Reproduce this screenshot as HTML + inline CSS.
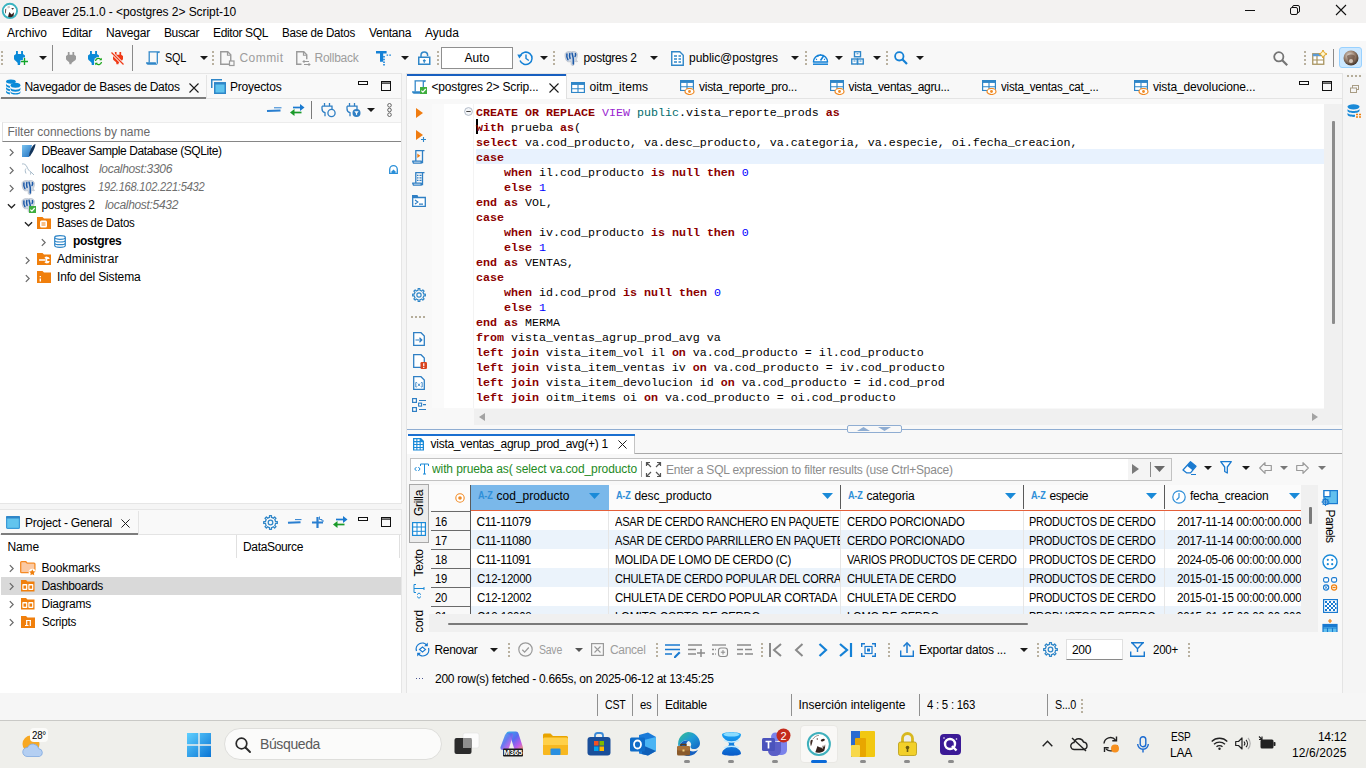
<!DOCTYPE html>
<html><head><meta charset="utf-8"><title>DBeaver</title>
<style>
*{box-sizing:border-box;margin:0;padding:0}
html,body{width:1366px;height:768px;overflow:hidden;background:#f5f5f5}
body{position:relative;font-family:"Liberation Sans",sans-serif;font-size:12px;color:#000}
.a{position:absolute}
.t{position:absolute;white-space:nowrap;font-size:12px;line-height:16px;height:16px;color:#000}
.g{color:#8a8a8a}
.i{font-style:italic;color:#6e6e6e}
svg{position:absolute;overflow:visible}
.dd{position:absolute;width:0;height:0;border-left:4px solid transparent;border-right:4px solid transparent;border-top:4px solid #1a1a1a}
.hd{position:absolute;width:2px;height:22px;background-image:linear-gradient(#b9b1a0 50%,transparent 50%);background-size:2px 4px}
.vs{position:absolute;width:1px;background:#a0a0a0}
.code{position:absolute;white-space:pre;font-family:"Liberation Mono",monospace;font-size:11.67px;line-height:15px;height:15px;color:#000}
.k{color:#8b0000;font-weight:bold}
.v{color:#9a1fd0;font-weight:normal}
.p{color:#006b6b}
.n{color:#0000ff}
</style></head>
<body>

<!-- symbols -->
<svg width="0" height="0" style="left:-10px;top:-10px">
<defs>
<symbol id="plug" viewBox="0 0 11 14" preserveAspectRatio="none"><path d="M2 0h1.900v3h3.200V0h1.900v3l2 1.500v3c0 1-0.800 1.600-2 2.500-1.800 1.300-3 1.700-3 3.500v0.500H3.700V12.500C3.700 10.500 0 9.800 0 7.500v-3L2 3z"></path></symbol>
<symbol id="chr" viewBox="0 0 6 10"><path d="M1 1l4 4-4 4" fill="none" stroke="#6a6a6a" stroke-width="1.500"></path></symbol>
<symbol id="chd" viewBox="0 0 10 6"><path d="M1 1l4 4 4-4" fill="none" stroke="#222" stroke-width="1.400"></path></symbol>
<symbol id="xx" viewBox="0 0 10 10"><path d="M0.500 0.500l9 9M9.500 0.500l-9 9" fill="none" stroke="#1a1a1a" stroke-width="1.100"></path></symbol>
<symbol id="tbl" viewBox="0 0 14 12" preserveAspectRatio="none"><rect x="0.600" y="0.600" width="12.800" height="10.800" fill="#fff" stroke="#2f86c8" stroke-width="1.200"></rect><rect x="0" y="0" width="14" height="3.200" fill="#2f86c8"></rect><path d="M7 3v8.500M0.600 7.300h12.800" stroke="#2f86c8" stroke-width="1.100"></path></symbol>
<symbol id="eye" viewBox="0 0 10 7"><ellipse cx="5" cy="3.500" rx="4.500" ry="3" fill="#fff" stroke="#f08a24" stroke-width="1.200"></ellipse><circle cx="5" cy="3.500" r="1.400" fill="#f08a24"></circle></symbol>
<symbol id="scr" viewBox="0 0 14 14"><path d="M2.500 0.800h10.800l-0.800 1.200M3.200 0.800v10.700M11.300 1.200v11.500" fill="none" stroke="#2f86c8" stroke-width="1.250" stroke-linejoin="round"></path><path d="M0 11.300h9.800c0 1 0.500 1.800 1.500 2v0.500H2C0.800 13.800 0 12.800 0 11.300z" fill="#2f86c8"></path></symbol>
<symbol id="fold" viewBox="0 0 16 13"><path d="M0 1.500h6l1.500 2H16V13H0z"></path></symbol>
<symbol id="pg" viewBox="0 0 14 15"><path d="M1.200 2.500C2 0.800 5 0.300 7.500 0.800c2-0.800 5.300-0.300 5.800 2 0.400 2.200-0.300 4.500-1.300 6.300 0.800 0.500 1.500 0.800 1.500 1.300-0.800 0.600-2.200 0.300-3.200-0.300L10 13.500c-0.300 1.500-2.300 1.500-2.700 0L7 10.500c-1.200 0.300-2.500 0.600-3.700 0-1.800-1-2.700-5.500-2.100-8z" fill="#cdd7e4" stroke="#b6bcc6" stroke-width="0.700"></path><path d="M2.900 3c-0.300 2 0 4.300 1 5.600M5.800 2.600c-0.500 2-0.200 3.600 0.300 4.800M8.100 2.300c0.500 2.500 1.200 4 1.200 6.200v4.600M11.400 2.600c0.500 1 0.300 2-0.300 2.800" stroke="#1a58a8" stroke-width="1.500" fill="none" stroke-linecap="round"></path></symbol>
<symbol id="gear" viewBox="0 0 15 15"><path d="M12.33 5.85 L12.50 6.51 L14.33 6.50 L14.33 8.50 L12.50 8.49 L12.33 9.15 L12.08 9.74 L11.74 10.33 L13.03 11.62 L11.62 13.03 L10.33 11.74 L9.74 12.08 L9.15 12.33 L8.49 12.50 L8.50 14.33 L6.50 14.33 L6.51 12.50 L5.85 12.33 L5.26 12.08 L4.67 11.74 L3.38 13.03 L1.97 11.62 L3.26 10.33 L2.92 9.74 L2.67 9.15 L2.50 8.49 L0.67 8.50 L0.67 6.50 L2.50 6.51 L2.67 5.85 L2.92 5.26 L3.26 4.67 L1.97 3.38 L3.38 1.97 L4.67 3.26 L5.26 2.92 L5.85 2.67 L6.51 2.50 L6.50 0.67 L8.50 0.67 L8.49 2.50 L9.15 2.67 L9.74 2.92 L10.33 3.26 L11.62 1.97 L13.03 3.38 L11.74 4.67 L12.08 5.26z" fill="none" stroke="#2f86c8" stroke-width="1.250" stroke-linejoin="round"></path><circle cx="7.500" cy="7.500" r="2.300" fill="none" stroke="#2f86c8" stroke-width="1.250"></circle></symbol>
</defs></svg>
<!-- ===== title bar ===== -->
<div class="a" id="titlebar" style="left:0;top:0;width:1366px;height:23px;background:#f3f2f1"></div>
<!-- ===== menu bar ===== -->
<div class="a" id="menubar" style="left:0;top:23px;width:1366px;height:18px;background:#fff"></div>
<!-- ===== toolbar ===== -->
<div class="a" id="toolbar" style="left:0;top:41px;width:1366px;height:32px;background:#f8f8f8"></div>
<!-- ===== left top panel ===== -->
<div class="a" id="lp" style="left:0;top:73px;width:402px;height:431px;background:#fff;border:1px solid #e6e6e6;border-left:0"></div>
<div class="a" style="left:0;top:74px;width:401px;height:48px;background:#f9f9f9"></div>
<div class="a" style="left:0;top:98px;width:401px;height:1px;background:#e4e4e4"></div>
<!-- ===== left bottom panel ===== -->
<div class="a" id="lb" style="left:0;top:509px;width:402px;height:185px;background:#fff;border:1px solid #e6e6e6;border-left:0"></div>
<div class="a" style="left:0;top:510px;width:401px;height:24px;background:#f9f9f9"></div>
<div class="a" style="left:0;top:534px;width:401px;height:1px;background:#e4e4e4"></div>
<!-- ===== editor panel ===== -->
<div class="a" id="ed" style="left:406px;top:73px;width:937px;height:621px;background:#f8f8f8;border:1px solid #e4e4e4"></div>
<!-- ===== right strip ===== -->
<div class="a" id="rs" style="left:1343px;top:73px;width:23px;height:620px;background:#f5f5f5"></div>
<!-- ===== status bar ===== -->
<div class="a" id="sb" style="left:0;top:693px;width:1366px;height:27px;background:#f6f6f6"></div>
<!-- ===== taskbar ===== -->
<div class="a" id="tb" style="left:0;top:720px;width:1366px;height:48px;background:#efefeb;border-top:1px solid #c9c9c6"></div>

<!-- title content -->
<svg style="left:1px;top:2px" width="18" height="18" viewBox="0 0 18 18"><circle cx="8.900" cy="8.900" r="7.150" fill="#fff" stroke="#3ab3c0" stroke-width="1.900"></circle><path d="M7 14.800l1.300-4.800 2.200 2.600 2.600-2.300-0.600 3.600c-1.600 1.400-3.800 1.700-5.500 0.900z" fill="#35201c"></path><path d="M10.200 6.300l2.800-0.300-1.300 1.800z" fill="#35201c"></path><path d="M4.300 7.300l1-0.900-0.400 4.200-0.900 1.200z" fill="#4a3530"></path><path d="M6.300 5.200l2.500-1M6.800 6l2-0.600" stroke="#8a7a74" stroke-width="0.500"></path></svg>
<span class="t" style="left: 23px; top: 4px; letter-spacing: -0.06px;">DBeaver 25.1.0 - &lt;postgres 2&gt; Script-10</span>
<svg style="left:1245px;top:10px" width="10" height="1"><rect width="10" height="1" fill="#111"></rect></svg>
<svg style="left:1290px;top:5px" width="10" height="10" viewBox="0 0 10 10"><rect x="0.500" y="2.500" width="7" height="7" rx="1.500" fill="none" stroke="#111"></rect><path d="M2.500 2.500V2a1.500 1.500 0 0 1 1.500-1.500h4A1.500 1.500 0 0 1 9.500 2v4a1.500 1.500 0 0 1-1.500 1.500h-0.500" fill="none" stroke="#111"></path></svg>
<svg style="left:1336px;top:5px" width="10" height="10" viewBox="0 0 10 10"><path d="M0 0l10 10M10 0L0 10" stroke="#111" stroke-width="1.100"></path></svg>
<!-- menu -->
<span class="t" style="left: 7px; top: 25px; letter-spacing: 0px;">Archivo</span>
<span class="t" style="left: 62px; top: 25px; letter-spacing: -0.23px;">Editar</span>
<span class="t" style="left: 106px; top: 25px; letter-spacing: -0.19px;">Navegar</span>
<span class="t" style="left: 164px; top: 25px; letter-spacing: -0.39px;">Buscar</span>
<span class="t" style="left: 213px; top: 25px; letter-spacing: -0.37px;">Editor SQL</span>
<span class="t" style="left: 282px; top: 25px; letter-spacing: -0.25px; transform: scaleX(0.9673); transform-origin: 0px 50%;">Base de Datos</span>
<span class="t" style="left: 369px; top: 25px; letter-spacing: -0.29px;">Ventana</span>
<span class="t" style="left: 425px; top: 25px; letter-spacing: 0.04px;">Ayuda</span>

<!-- toolbar content -->
<div class="hd" style="left:1px;top:51px;height:14px"></div>
<svg style="left:14px;top:51px" width="11" height="14" fill="#0a8ad8"><use href="#plug"></use></svg>
<svg style="left:20px;top:57px" width="9" height="9" viewBox="0 0 9 9"><path d="M4.500 0.500v8M0.500 4.500h8" stroke="#f8f8f8" stroke-width="3.200"></path><path d="M4.500 1v7M1 4.500h7" stroke="#12a52a" stroke-width="1.350"></path></svg>
<div class="dd" style="left:39px;top:56px"></div>
<div class="vs" style="left:52px;top:45px;height:26px;background:#8a8a8a"></div>
<svg style="left:65.500px;top:52px" width="10" height="12.500" fill="#9a9a9a"><use href="#plug"></use></svg>
<svg style="left:88px;top:51px" width="11" height="14" fill="#0a8ad8"><use href="#plug"></use></svg>
<svg style="left:94px;top:57px" width="9" height="9" viewBox="0 0 9 9"><circle cx="4.500" cy="4.500" r="4.500" fill="#f8f8f8"></circle><path d="M1.500 4a3 3 0 0 1 5.500-1.200M7.500 5a3 3 0 0 1-5.500 1.200" fill="none" stroke="#1aa51a" stroke-width="1.300"></path><path d="M7.800 0.800v2.500H5.300zM1.200 8.200V5.700h2.500z" fill="#1aa51a"></path></svg>
<svg style="left:112.500px;top:52px" width="10" height="12.500" fill="#f03a17"><use href="#plug"></use></svg>
<svg style="left:111px;top:52px" width="13" height="13" viewBox="0 0 13 13"><path d="M0.500 0.500l12 12" stroke="#f8f8f8" stroke-width="3"></path><path d="M0.500 0.500l12 12" stroke="#f03a17" stroke-width="1.300"></path></svg>
<div class="vs" style="left:132px;top:45px;height:26px;background:#8a8a8a"></div>
<svg style="left:146px;top:51px" width="14" height="14"><use href="#scr"></use></svg>
<span class="t" style="left: 165px; top: 50px; letter-spacing: -0.25px; transform: scaleX(0.9026); transform-origin: 0px 50%;">SQL</span>
<div class="dd" style="left:200px;top:56px"></div>
<div class="hd" style="left:212px;top:51px;height:14px"></div>
<svg style="left:220px;top:51px" width="15" height="15" viewBox="0 0 15 15"><path d="M0.750 0.750h7l3 3v9.500h-10z" fill="none" stroke="#9a9a9a" stroke-width="1.400"></path><path d="M7.500 0.750v3.500h3.500" fill="none" stroke="#9a9a9a" stroke-width="1.200"></path><rect x="9.500" y="10" width="4.500" height="4.500" fill="#f8f8f8" stroke="#9a9a9a" stroke-width="1.200"></rect></svg>
<span class="t g" style="left: 239.5px; top: 50px; color: rgb(157, 157, 157); letter-spacing: 0.44px;">Commit</span>
<svg style="left:296px;top:51px" width="15" height="15" viewBox="0 0 15 15"><path d="M5.500 13.250H0.750V0.750h7l3 3v4.500" fill="none" stroke="#9a9a9a" stroke-width="1.400"></path><path d="M7.500 0.750v3.500h3.500" fill="none" stroke="#9a9a9a" stroke-width="1.200"></path><path d="M7 10.500h6M7 10.500l1.500-1.500M7 10.500l1.500 1.500M14 13.500H8M14 13.500l-1.500-1.500M14 13.500l-1.500 1.500" stroke="#9a9a9a" stroke-width="1" fill="none"></path></svg>
<span class="t" style="left: 314.5px; top: 50px; color: rgb(157, 157, 157); letter-spacing: -0.25px;">Rollback</span>
<svg style="left:376px;top:51px" width="15" height="15" viewBox="0 0 15 15"><path d="M0 0.100h10.600v2.400H7.200v8.200H4V2.500H0z" fill="#1481d6"></path><path d="M10.600 3.500h1.500v1.300h-1.500zM13.300 3.500h1.600v1.300h-1.600zM7.200 5h1.600v1.500H7.200zM7.200 7.700h1.600v1.500H7.200zM7.200 10.500h1.600v1.500H7.200zM7.200 13h1.600v1.400H7.200z" fill="#1481d6"></path></svg>
<div class="dd" style="left:400.500px;top:56px"></div>
<svg style="left:418px;top:51px" width="13" height="14" viewBox="0 0 13 14"><rect x="0.750" y="6.250" width="11" height="7" fill="#fff" stroke="#2f86c8" stroke-width="1.500"></rect><path d="M3 6V4.200a3.300 3.300 0 0 1 6.600 0v0.800" fill="none" stroke="#2f86c8" stroke-width="1.500"></path><path d="M6.250 12V9M5 10l1.250-1.500L7.500 10z" stroke="#2f86c8" stroke-width="1" fill="#2f86c8"></path></svg>
<div class="hd" style="left:437px;top:51px;height:14px"></div>
<div class="a" style="left:441px;top:47px;width:72px;height:22px;background:#fff;border:1px solid #8f8f8f"></div>
<span class="t" style="left: 464.5px; top: 50px; letter-spacing: 0.08px;">Auto</span>
<svg style="left:517px;top:50px" width="17" height="16" viewBox="0 0 17 16"><path d="M3.300 5.500A6.200 6.200 0 1 1 3 10.500" fill="none" stroke="#1481d6" stroke-width="1.500"></path><path d="M0.300 4.500l5 0.300-3 3.700z" fill="#1481d6"></path><path d="M9 4.500v4l2.800 2" fill="none" stroke="#1481d6" stroke-width="1.400"></path></svg>
<div class="dd" style="left:539.500px;top:56px"></div>
<div class="hd" style="left:552.500px;top:51px;height:14px"></div>
<svg style="left:564px;top:50.500px" width="14" height="15"><use href="#pg"></use></svg>
<span class="t" style="left: 583.5px; top: 50px; letter-spacing: -0.3px;">postgres 2</span>
<div class="dd" style="left:650px;top:56px"></div>
<svg style="left:671px;top:51px" width="13" height="15" viewBox="0 0 13 15"><path d="M0.750 0.750h8l3.500 3.500v10H0.750z" fill="#fff" stroke="#2f86c8" stroke-width="1.400"></path><path d="M3 5h3M7.500 5h2.500M3 8h3M7.500 8h2.500M3 11h3M7.500 11h2.500" stroke="#2f86c8" stroke-width="1.400"></path></svg>
<span class="t" style="left: 689px; top: 50px; letter-spacing: -0.04px;">public@postgres</span>
<div class="dd" style="left:791px;top:56px"></div>
<div class="hd" style="left:804.500px;top:51px;height:14px"></div>
<svg style="left:812px;top:51px" width="17" height="14" viewBox="0 0 17 14"><path d="M1.500 11A7 7 0 1 1 15.500 11z" fill="#fff" stroke="#1481d6" stroke-width="1.500" stroke-linejoin="round"></path><path d="M1 13.200h15" stroke="#1481d6" stroke-width="1.500"></path><path d="M8.500 9.500l3-4.500" stroke="#1481d6" stroke-width="1.600"></path><path d="M4 8l1 0.700M5.500 4.800l0.800 1M8.500 3.200v1.200M13 8l-1 0.700" stroke="#1481d6" stroke-width="1.100"></path></svg>
<div class="dd" style="left:834.500px;top:56px"></div>
<svg style="left:851px;top:51px" width="13" height="14" viewBox="0 0 13 14"><rect x="3.500" y="0.750" width="6" height="5" fill="#fff" stroke="#2f86c8" stroke-width="1.400"></rect><rect x="0.750" y="8" width="5.500" height="5" fill="#fff" stroke="#2f86c8" stroke-width="1.400"></rect><rect x="6.750" y="8" width="5.500" height="5" fill="#fff" stroke="#2f86c8" stroke-width="1.400"></rect><path d="M5.500 2.800h2M2.500 10h2M8.500 10h2" stroke="#2f86c8" stroke-width="1"></path></svg>
<div class="dd" style="left:872.500px;top:56px"></div>
<div class="hd" style="left:885.500px;top:51px;height:14px"></div>
<svg style="left:894px;top:51px" width="14" height="14" viewBox="0 0 14 14"><circle cx="5.300" cy="5.300" r="4.200" fill="none" stroke="#1481d6" stroke-width="1.800"></circle><path d="M8.300 8.300l4.700 4.700" stroke="#1481d6" stroke-width="2.200"></path></svg>
<div class="dd" style="left:915.500px;top:56px"></div>
<svg style="left:1273px;top:51px" width="15" height="15" viewBox="0 0 15 15"><circle cx="5.800" cy="5.800" r="4.600" fill="none" stroke="#757575" stroke-width="1.800"></circle><path d="M9.200 9.200l5 5" stroke="#757575" stroke-width="2.200"></path></svg>
<div class="hd" style="left:1304px;top:51px;height:14px"></div>
<svg style="left:1312px;top:50px" width="15" height="15" viewBox="0 0 15 15"><rect x="0.750" y="3.750" width="11" height="10.500" fill="#fff" stroke="#a89460" stroke-width="1.300"></rect><rect x="0.750" y="3.750" width="11" height="2.500" fill="#5b9bd5"></rect><path d="M5 6v8M1 10h10.500" stroke="#a89460" stroke-width="1.200"></path><path d="M11 0l1.300 2.700L15 4l-2.700 1.300L11 8 9.700 5.300 7 4l2.700-1.300z" fill="#fff8d0" stroke="#e0a020" stroke-width="1"></path></svg>
<div class="vs" style="left:1333px;top:49px;height:18px;background:#8a8a8a"></div>
<div class="a" style="left:1339px;top:47px;width:23px;height:21px;background:#cce8ff;border:1px solid #99d1ff;border-radius:3px"></div>
<svg style="left:1343px;top:50px" width="16" height="16" viewBox="0 0 16 16"><defs><radialGradient id="bv" cx="0.400" cy="0.350" r="0.700"><stop offset="0" stop-color="#e8e0d8"></stop><stop offset="0.500" stop-color="#9a8270"></stop><stop offset="1" stop-color="#3a2a20"></stop></radialGradient></defs><circle cx="8" cy="8" r="7.500" fill="url(#bv)"></circle><path d="M4 6c2-2 6-2 8 0l-1 5c-2 1.500-4 1.500-6 0z" fill="#6a5040" opacity="0.700"></path><circle cx="8" cy="11" r="2" fill="#e8dccf" opacity="0.800"></circle></svg>

<!-- left top panel content -->
<div class="a" style="left:1px;top:97px;width:205px;height:2px;background:#7d7d7d"></div>
<div class="a" style="left:206px;top:75px;width:1px;height:23px;background:#e4e4e4"></div>
<svg style="left:6px;top:79px" width="15" height="15.500" viewBox="0 0 15 15.500"><g fill="#0a8ad8"><ellipse cx="4.900" cy="2.600" rx="4.900" ry="2.100"></ellipse><path d="M0 4.300c0 1.300 1.700 2.300 3.900 2.700v1.900C1.700 8.500 0 7.500 0 6.200z"></path><path d="M0 7.600c0 1.300 1.700 2.300 3.900 2.700v1.900C1.700 11.800 0 10.800 0 9.500z"></path><path d="M0 10.900c0 1.300 1.700 2.300 3.900 2.700v1.900C1.700 15.100 0 14.100 0 12.800z"></path><ellipse cx="9.500" cy="6.300" rx="4.900" ry="2.500"></ellipse><path d="M4.600 8.600c0 3 9.800 3 9.800 0v2c0 3-9.800 3-9.800 0z"></path><path d="M4.600 11.900c0 3 9.800 3 9.800 0v1.500c0 2.800-9.800 2.800-9.800 0z"></path></g></svg>
<span class="t" style="left: 24.5px; top: 79px; letter-spacing: -0.31px;">Navegador de Bases de Datos</span>
<svg style="left:189px;top:83px" width="10" height="10"><use href="#xx"></use></svg>
<svg style="left:211px;top:79px" width="15" height="15" viewBox="0 0 15 15"><path d="M0.750 9V0.750H11" fill="none" stroke="#2f86c8" stroke-width="1.500"></path><rect x="3.750" y="4" width="10.500" height="10.250" fill="#5fc3ee" stroke="#2f86c8" stroke-width="1.500"></rect><rect x="3" y="3.200" width="12" height="2.300" fill="#2f86c8"></rect></svg>
<span class="t" style="left: 230px; top: 79px; letter-spacing: -0.21px;">Proyectos</span>
<svg style="left:358px;top:81px" width="10" height="4"><rect x="0.500" y="0.500" width="9" height="3" fill="none" stroke="#111"></rect></svg>
<svg style="left:381px;top:81px" width="10" height="10"><rect x="0.500" y="0.500" width="9" height="9" fill="none" stroke="#111"></rect><rect x="0" y="0" width="10" height="1.500" fill="#111"></rect><rect x="0" y="2.200" width="10" height="0.700" fill="#111"></rect></svg>
<!-- nav toolbar -->
<svg style="left:267px;top:107px" width="15" height="6" viewBox="0 0 15 6"><path d="M7 0.800h7.500" stroke="#2a7fd0" stroke-width="1"></path><path d="M0 4L13.500 3.400" stroke="#2a7fd0" stroke-width="2"></path></svg>
<svg style="left:289px;top:104px" width="16" height="12" viewBox="0 0 16 12"><path d="M4 3.500h8" stroke="#1a7ad0" stroke-width="1.700"></path><path d="M11 0l4.500 3.500L11 7z" fill="#1a7ad0"></path><path d="M4.500 8.500h8" stroke="#1a9a2a" stroke-width="1.700"></path><path d="M5.500 5L1 8.500 5.500 12z" fill="#1a9a2a"></path></svg>
<div class="vs" style="left:311px;top:101px;height:18px;background:#7a7a7a"></div>
<svg style="left:321px;top:103px" width="15" height="14" viewBox="0 0 15 14"><path d="M3.500 0v3M8.500 0v3M1 3.200h10v2.500c0 2-1.500 3.800-3.500 4M1 3.200v2.500c0 2 1.200 3.500 3 4v3.500" fill="none" stroke="#2f7fc4" stroke-width="1.300"></path><circle cx="10.500" cy="10" r="3.600" fill="#f9f9f9" stroke="#2f7fc4" stroke-width="1.300"></circle></svg>
<svg style="left:346px;top:103px" width="15" height="14" viewBox="0 0 15 14"><path d="M3.500 0v3M8.500 0v3M1 3.200h10v2.500c0 2-1.500 3.800-3.500 4M1 3.200v2.500c0 2 1.200 3.500 3 4v3.500" fill="none" stroke="#2f7fc4" stroke-width="1.300"></path><circle cx="10.500" cy="10" r="4" fill="#2f7fc4"></circle><path d="M8.300 8.300h4.400l-1.600 1.900v2l-1.200-0.600v-1.400z" fill="#fff"></path></svg>
<div class="dd" style="left:366.500px;top:108px"></div>
<svg style="left:386px;top:103px" width="7" height="14" viewBox="0 0 7 14"><circle cx="3.500" cy="2.300" r="1.800" fill="none" stroke="#555" stroke-width="0.900"></circle><circle cx="3.500" cy="7" r="1.800" fill="none" stroke="#555" stroke-width="0.900"></circle><circle cx="3.500" cy="11.700" r="1.800" fill="none" stroke="#555" stroke-width="0.900"></circle></svg>
<!-- filter -->
<div class="a" style="left:2px;top:122px;width:399px;height:20px;background:#fff;border-left:1px solid #e0e0e0;border-top:1px solid #ececec;border-bottom:1px solid #868686"></div>
<span class="t" style="left: 7.5px; top: 123.5px; color: rgb(106, 106, 106); letter-spacing: -0.03px;">Filter connections by name</span>
<!-- tree -->
<svg style="left:9px;top:148px" width="5" height="9"><use href="#chr"></use></svg>
<svg style="left:22px;top:144px" width="14" height="13" viewBox="0 0 14 13"><defs><linearGradient id="sq" x1="0" y1="0" x2="1" y2="1"><stop offset="0" stop-color="#7cc4f0"></stop><stop offset="1" stop-color="#1f6fc0"></stop></linearGradient></defs><path d="M0 1h10l-3 12H0z" fill="url(#sq)"></path><path d="M13.500 0c-3 1-5.500 5-6.500 12l1 0.500c1.500-3 5-7 5.500-12.500z" fill="#12345a"></path></svg>
<span class="t" style="left: 41.5px; top: 143px; letter-spacing: -0.42px;">DBeaver Sample Database (SQLite)</span>
<svg style="left:9px;top:166px" width="5" height="9"><use href="#chr"></use></svg>
<svg style="left:21px;top:163px" width="14" height="14" viewBox="0 0 14 14"><path d="M1 1c2-0.500 4 0.500 5 3 1 2.500 2 4 4 5l3 3M5 5.500c-1 1-1 3 0 5M10 9l-0.500 2.500" fill="none" stroke="#a9bccb" stroke-width="1"></path></svg>
<span class="t" style="left: 41.5px; top: 161px; letter-spacing: -0.04px;">localhost</span>
<span class="t i" style="left: 99px; top: 161px; letter-spacing: -0.31px;">localhost:3306</span>
<svg style="left:389px;top:165px" width="9" height="9" viewBox="0 0 9 9"><path d="M0.700 8.300V4.500a3.800 3.800 0 0 1 7.600 0v3.800z" fill="#fff" stroke="#2a8fd8" stroke-width="1.300"></path><path d="M2.500 8V6.500l2-2 2 2V8z" fill="#2a8fd8"></path></svg>
<svg style="left:9px;top:184px" width="5" height="9"><use href="#chr"></use></svg>
<svg style="left:21px;top:179.500px" width="14" height="15"><use href="#pg"></use></svg>
<span class="t" style="left: 41.5px; top: 179px; letter-spacing: -0.25px;">postgres</span>
<span class="t i" style="left: 97.5px; top: 179px; letter-spacing: -0.25px; transform: scaleX(0.9251); transform-origin: 0px 50%;">192.168.102.221:5432</span>
<svg style="left:7px;top:203px" width="9" height="6"><use href="#chd"></use></svg>
<svg style="left:21px;top:197.500px" width="14" height="15"><use href="#pg"></use></svg>
<svg style="left:29px;top:206px" width="7" height="7" viewBox="0 0 7 7"><rect width="7" height="7" fill="#3fae3f"></rect><path d="M1.300 3.600l1.600 1.600 2.800-3.200" fill="none" stroke="#fff" stroke-width="1.200"></path></svg>
<span class="t" style="left: 41.5px; top: 197px; letter-spacing: -0.3px;">postgres 2</span>
<span class="t i" style="left: 105px; top: 197px; letter-spacing: -0.31px;">localhost:5432</span>
<svg style="left:23.500px;top:221px" width="9" height="6"><use href="#chd"></use></svg>
<svg style="left:37px;top:217px" width="14" height="12" viewBox="0 0 14 12"><path d="M0 0h5.500l1.500 1.500h7V12H0z" fill="#f07f0c"></path><rect x="3" y="3.500" width="7" height="7" rx="1.500" fill="#fff"></rect><path d="M4.500 6h4M4.500 8h4" stroke="#f07f0c" stroke-width="1"></path></svg>
<span class="t" style="left: 57px; top: 215px; letter-spacing: -0.25px; transform: scaleX(0.9542); transform-origin: 0px 50%;">Bases de Datos</span>
<svg style="left:41px;top:238px" width="5" height="9"><use href="#chr"></use></svg>
<svg style="left:54px;top:235px" width="12" height="13" viewBox="0 0 12 13"><path d="M0.700 2.500v8c0 2.400 10.600 2.400 10.600 0v-8M0.700 5.200c0 2.400 10.600 2.400 10.600 0M0.700 7.900c0 2.400 10.600 2.400 10.600 0" fill="none" stroke="#2f86c8" stroke-width="1.200"></path><ellipse cx="6" cy="2.500" rx="5.300" ry="1.800" fill="#fff" stroke="#2f86c8" stroke-width="1.200"></ellipse></svg>
<span class="t" style="left: 73px; top: 233px; font-weight: bold; letter-spacing: -0.27px;">postgres</span>
<svg style="left:25px;top:256px" width="5" height="9"><use href="#chr"></use></svg>
<svg style="left:37px;top:253px" width="14" height="12" viewBox="0 0 14 12"><path d="M0 0h5.500l1.500 1.500h7V12H0z" fill="#f07f0c"></path><path d="M2 7h6.500M8 5.200c1-1.200 3-1 3.500 0H9.500v3.600h2c-0.500 1-2.500 1.200-3.500 0" fill="none" stroke="#fff" stroke-width="1.500"></path></svg>
<span class="t" style="left: 57px; top: 251px; letter-spacing: 0.07px;">Administrar</span>
<svg style="left:25px;top:274px" width="5" height="9"><use href="#chr"></use></svg>
<svg style="left:37px;top:271px" width="14" height="12" viewBox="0 0 14 12"><path d="M0 0h5.500l1.500 1.500h7V12H0z" fill="#f07f0c"></path><path d="M3.300 5v1.200M3.300 7.500v3" stroke="#fff" stroke-width="1.400"></path></svg>
<span class="t" style="left: 57px; top: 269px; letter-spacing: -0.16px;">Info del Sistema</span>

<!-- project panel content -->
<div class="a" style="left:1px;top:533px;width:137px;height:2px;background:#7d7d7d"></div>
<div class="a" style="left:138px;top:511px;width:1px;height:23px;background:#e4e4e4"></div>
<svg style="left:6px;top:516px" width="14" height="13" viewBox="0 0 14 13"><rect x="0.600" y="0.600" width="12.800" height="11.800" rx="1" fill="#62c4ee" stroke="#3a9ad8" stroke-width="1.200"></rect><rect x="0" y="0" width="14" height="2.600" rx="1" fill="#2f86c8"></rect></svg>
<span class="t" style="left: 25px; top: 515px; letter-spacing: -0.22px;">Project - General</span>
<svg style="left:121px;top:519px" width="9" height="9"><use href="#xx"></use></svg>
<svg style="left:263px;top:515px" width="15" height="15"><use href="#gear"></use></svg>
<svg style="left:288px;top:519px" width="14" height="6" viewBox="0 0 14 6"><path d="M7 0.600h6.500" stroke="#2a7fd0" stroke-width="1"></path><path d="M0 3.800L12.500 3.200" stroke="#2a7fd0" stroke-width="2"></path></svg>
<svg style="left:312px;top:516px" width="13" height="13" viewBox="0 0 13 13"><path d="M0 6.500h11M5.500 1v11" stroke="#2a7fd0" stroke-width="2.200" fill="none"></path><path d="M7.500 0.500v3h2.500v1.500h2" stroke="#2a7fd0" stroke-width="0.900" fill="none"></path></svg>
<svg style="left:332px;top:516px" width="16" height="12" viewBox="0 0 16 12"><path d="M4 3.500h8" stroke="#1a7ad0" stroke-width="1.700"></path><path d="M11 0l4.500 3.500L11 7z" fill="#1a7ad0"></path><path d="M4.500 8.500h8" stroke="#1a9a2a" stroke-width="1.700"></path><path d="M5.500 5L1 8.500 5.500 12z" fill="#1a9a2a"></path></svg>
<svg style="left:358px;top:517px" width="10" height="4"><rect x="0.500" y="0.500" width="9" height="3" fill="none" stroke="#111"></rect></svg>
<svg style="left:381px;top:517px" width="10" height="10"><rect x="0.500" y="0.500" width="9" height="9" fill="none" stroke="#111"></rect><rect x="0" y="0" width="10" height="1.500" fill="#111"></rect><rect x="0" y="2.200" width="10" height="0.700" fill="#111"></rect></svg>
<!-- header -->
<span class="t" style="left: 7.5px; top: 538.5px; letter-spacing: -0.13px;">Name</span>
<div class="a" style="left:236px;top:535px;width:1px;height:23px;background:#e0e0e0"></div>
<span class="t" style="left: 243px; top: 538.5px; letter-spacing: -0.34px;">DataSource</span>
<div class="a" style="left:399px;top:535px;width:1px;height:23px;background:#e0e0e0"></div>
<!-- rows -->
<div class="a" style="left:1px;top:577px;width:400px;height:18px;background:#d9d9d9"></div>
<svg style="left:9px;top:564px" width="5" height="9"><use href="#chr"></use></svg>
<svg style="left:20px;top:561px" width="16" height="15" viewBox="0 0 16 15"><path d="M0.700 1.600q0-0.900 0.900-0.900h4.200l1.400 1.500h6.800q0.900 0 0.900 0.900V10.700q0 0.900-0.900 0.900H1.600q-0.900 0-0.900-0.900z" fill="#fbc9a3" stroke="#f58a24" stroke-width="1.300"></path><circle cx="12.300" cy="11.300" r="3.600" fill="#fff"></circle><path d="M12.300 8.300l0.950 1.950 2.150 0.300-1.550 1.500 0.350 2.150-1.900-1-1.900 1 0.350-2.150-1.550-1.500 2.150-0.300z" fill="#f07f0c"></path></svg>
<span class="t" style="left: 41.5px; top: 560px; letter-spacing: -0.17px;">Bookmarks</span>
<svg style="left:9px;top:582px" width="5" height="9"><use href="#chr"></use></svg>
<svg style="left:21px;top:580px" width="14" height="12" viewBox="0 0 14 12"><path d="M0 0h5l1.500 1.500H13.500V11.500H0z" fill="#f07f0c"></path><rect x="1.300" y="4" width="5" height="6" rx="0.800" fill="#fff"></rect><rect x="2.500" y="5.500" width="2.600" height="3.200" fill="#f07f0c"></rect><rect x="7.300" y="4" width="5" height="6" rx="0.800" fill="#fff"></rect><rect x="8.500" y="5.500" width="2.600" height="3.200" fill="#f07f0c"></rect></svg>
<span class="t" style="left: 41.5px; top: 578px; letter-spacing: -0.32px;">Dashboards</span>
<svg style="left:9px;top:600px" width="5" height="9"><use href="#chr"></use></svg>
<svg style="left:21px;top:598px" width="14" height="12" viewBox="0 0 14 12"><path d="M0 0h5l1.500 1.500H13.500V11.500H0z" fill="#f07f0c"></path><rect x="1.300" y="4" width="5" height="6" rx="0.800" fill="#fff"></rect><rect x="2.500" y="5.500" width="2.600" height="3.200" fill="#f07f0c"></rect><rect x="7.300" y="4" width="5" height="6" rx="0.800" fill="#fff"></rect><rect x="8.500" y="5.500" width="2.600" height="3.200" fill="#f07f0c"></rect></svg>
<span class="t" style="left: 41.5px; top: 596px; letter-spacing: -0.23px;">Diagrams</span>
<svg style="left:9px;top:618px" width="5" height="9"><use href="#chr"></use></svg>
<svg style="left:21px;top:616px" width="14" height="12" viewBox="0 0 14 12"><path d="M0 0h5l1.500 1.500H14V12H0z" fill="#f07f0c"></path><path d="M5 4.500h5M5.700 4.500v5M9.300 4.500v5.500M4 9.500h3.500" stroke="#fff" stroke-width="1.200" fill="none"></path></svg>
<span class="t" style="left: 41.5px; top: 614px; letter-spacing: -0.25px; transform: scaleX(0.9732); transform-origin: 0px 50%;">Scripts</span>

<!-- editor tabs -->
<div class="a" style="left:407px;top:98px;width:935px;height:1px;background:#e4e4e4"></div>
<div class="a" style="left:407px;top:74px;width:160px;height:25px;background:#fff;border-right:1px solid #e0e0e0"></div>
<div class="a" style="left:407px;top:74px;width:159px;height:2px;background:#175fc0"></div>
<svg style="left:412px;top:80px" width="14" height="14"><use href="#scr"></use></svg>
<svg style="left:420px;top:87px" width="7" height="7" viewBox="0 0 7 7"><rect width="7" height="7" fill="#3fae3f"></rect><path d="M1.300 3.600l1.600 1.600 2.800-3.200" fill="none" stroke="#fff" stroke-width="1.200"></path></svg>
<span class="t" style="left: 431.5px; top: 79px; letter-spacing: -0.18px;">&lt;postgres 2&gt; Scrip...</span>
<svg style="left:549px;top:83px" width="10" height="10"><use href="#xx"></use></svg>
<svg style="left:571px;top:82px" width="14" height="11"><use href="#tbl"></use></svg>
<span class="t" style="left: 589.5px; top: 79px; letter-spacing: 0.05px;">oitm_items</span>
<svg style="left:680px;top:80px" width="14" height="11"><use href="#tbl"></use></svg><svg style="left:684px;top:88px" width="11" height="7"><use href="#eye"></use></svg>
<span class="t" style="left: 699px; top: 79px; letter-spacing: -0.27px;">vista_reporte_pro...</span>
<svg style="left:830px;top:80px" width="14" height="11"><use href="#tbl"></use></svg><svg style="left:834px;top:88px" width="11" height="7"><use href="#eye"></use></svg>
<span class="t" style="left: 848.5px; top: 79px; letter-spacing: -0.32px;">vista_ventas_agru...</span>
<svg style="left:982px;top:80px" width="14" height="11"><use href="#tbl"></use></svg><svg style="left:986px;top:88px" width="11" height="7"><use href="#eye"></use></svg>
<span class="t" style="left: 1000.5px; top: 79px; letter-spacing: -0.25px; transform: scaleX(0.9647); transform-origin: 0px 50%;">vista_ventas_cat_...</span>
<svg style="left:1134px;top:80px" width="14" height="11"><use href="#tbl"></use></svg><svg style="left:1138px;top:88px" width="11" height="7"><use href="#eye"></use></svg>
<span class="t" style="left: 1153px; top: 79px; letter-spacing: -0.15px;">vista_devolucione...</span>
<svg style="left:1299px;top:81px" width="10" height="4"><rect x="0.500" y="0.500" width="9" height="3" fill="none" stroke="#111"></rect></svg>
<svg style="left:1322px;top:81px" width="10" height="10"><rect x="0.500" y="0.500" width="9" height="9" fill="none" stroke="#111"></rect><rect x="0" y="0" width="10" height="1.500" fill="#111"></rect><rect x="0" y="2.200" width="10" height="0.700" fill="#111"></rect></svg>
<!-- editor body -->
<div class="a" id="code" style="left:432px;top:104px;width:892px;height:304px;background:#fff;overflow:hidden">
<div class="a" style="left:0;top:0;width:12px;height:304px;background:#fafafa"></div>
<div class="a" style="left:41px;top:0;width:1px;height:304px;background:#f3f3f3"></div>
<div class="a" style="left:44px;top:45px;width:848px;height:15px;background:#e8f2fe"></div>
<svg style="left:32px;top:3px" width="9" height="9" viewBox="0 0 9 9"><circle cx="4.500" cy="4.500" r="3.900" fill="#f4f6f9" stroke="#aab4c2" stroke-width="0.900"></circle><path d="M2.300 4.500h4.400" stroke="#444" stroke-width="1"></path></svg>
<div class="a" style="left:44px;top:15px;width:2px;height:15px;background:#000"></div>
<div class="code" style="left:44px;top:2.1px"><b class="k">CREATE</b> <b class="k">OR</b> <b class="k">REPLACE</b> <b class="v">VIEW</b> <span class="p">public</span>.vista_reporte_prods <b class="k">as</b></div>
<div class="code" style="left:44px;top:17.1px"><b class="k">with</b> prueba <b class="k">as</b>(</div>
<div class="code" style="left:44px;top:32.1px"><b class="k">select</b> va.cod_producto, va.desc_producto, va.categoria, va.especie, oi.fecha_creacion,</div>
<div class="code" style="left:44px;top:47.1px"><b class="k">case</b></div>
<div class="code" style="left:44px;top:62.1px">    <b class="k">when</b> il.cod_producto <b class="k">is</b> <b class="k">null</b> <b class="k">then</b> <span class="n">0</span></div>
<div class="code" style="left:44px;top:77.1px">    <b class="k">else</b> <span class="n">1</span></div>
<div class="code" style="left:44px;top:92.1px"><b class="k">end</b> <b class="k">as</b> VOL,</div>
<div class="code" style="left:44px;top:107.1px"><b class="k">case</b></div>
<div class="code" style="left:44px;top:122.1px">    <b class="k">when</b> iv.cod_producto <b class="k">is</b> <b class="k">null</b> <b class="k">then</b> <span class="n">0</span></div>
<div class="code" style="left:44px;top:137.1px">    <b class="k">else</b> <span class="n">1</span></div>
<div class="code" style="left:44px;top:152.1px"><b class="k">end</b> <b class="k">as</b> VENTAS,</div>
<div class="code" style="left:44px;top:167.1px"><b class="k">case</b></div>
<div class="code" style="left:44px;top:182.1px">    <b class="k">when</b> id.cod_prod <b class="k">is</b> <b class="k">null</b> <b class="k">then</b> <span class="n">0</span></div>
<div class="code" style="left:44px;top:197.1px">    <b class="k">else</b> <span class="n">1</span></div>
<div class="code" style="left:44px;top:212.1px"><b class="k">end</b> <b class="k">as</b> MERMA</div>
<div class="code" style="left:44px;top:227.1px"><b class="k">from</b> vista_ventas_agrup_prod_avg va</div>
<div class="code" style="left:44px;top:242.1px"><b class="k">left</b> <b class="k">join</b> vista_item_vol il <b class="k">on</b> va.cod_producto = il.cod_producto</div>
<div class="code" style="left:44px;top:257.1px"><b class="k">left</b> <b class="k">join</b> vista_item_ventas iv <b class="k">on</b> va.cod_producto = iv.cod_producto</div>
<div class="code" style="left:44px;top:272.1px"><b class="k">left</b> <b class="k">join</b> vista_item_devolucion id <b class="k">on</b> va.cod_producto = id.cod_prod</div>
<div class="code" style="left:44px;top:287.1px"><b class="k">left</b> <b class="k">join</b> oitm_items oi <b class="k">on</b> va.cod_producto = oi.cod_producto</div>
<div class="code" style="left:44px;top:302.1px"><b class="k">left</b> <b class="k">join</b> vista_item_cat ic <b class="k">on</b> va.cod_producto = ic.cod_producto</div>
</div>
<!-- v scrollbar -->
<div class="a" style="left:1324px;top:104px;width:18px;height:321px;background:#f0f0f0"></div>
<div class="a" style="left:1332px;top:121px;width:3px;height:203px;background:#8c8c8c;border-radius:1px"></div>
<!-- h scrollbar -->
<div class="a" style="left:474px;top:409px;width:850px;height:16px;background:#f0f0f0"></div>
<svg style="left:479px;top:413px" width="6" height="8" viewBox="0 0 6 8"><path d="M6 0v8L0 4z" fill="#a3a3a3"></path></svg>
<svg style="left:1312px;top:413px" width="6" height="8" viewBox="0 0 6 8"><path d="M0 0v8l6-4z" fill="#a3a3a3"></path></svg>
<!-- side toolbar -->
<svg style="left:416px;top:108px" width="7" height="10" viewBox="0 0 7 10"><path d="M0 0l7 5-7 5z" fill="#f07c10"></path></svg>
<svg style="left:416px;top:130px" width="7" height="10" viewBox="0 0 7 10"><path d="M0 0l7 5-7 5z" fill="#f07c10"></path></svg>
<svg style="left:421px;top:137px" width="5" height="5" viewBox="0 0 5 5"><path d="M2.500 0v5M0 2.500h5" stroke="#2f86c8" stroke-width="1.100"></path></svg>
<svg style="left:412px;top:150px" width="13" height="14" viewBox="0 0 13 14"><path d="M3.200 0.700h9.300M3.800 0.700v10.500M10.500 1.200v12M0.700 11.200h8.500v2H1.500z" fill="none" stroke="#2f7fc4" stroke-width="1.300" stroke-linejoin="round"></path><path d="M5.300 3.500l3 2.200-3 2.200z" fill="#f07c10"></path></svg>
<svg style="left:412px;top:172px" width="13" height="14" viewBox="0 0 13 14"><path d="M3.200 0.700h9.300M3.800 0.700v10.500M10.500 1.200v12M0.700 11.200h8.500v2H1.500z" fill="none" stroke="#2f7fc4" stroke-width="1.300" stroke-linejoin="round"></path><path d="M5 3.300h1.500M7.500 3.300h2M5 5.800h1.500M7.500 5.800h2M5 8.300h1.500M7.500 8.300h2" stroke="#2f7fc4" stroke-width="1.200"></path></svg>
<svg style="left:412px;top:195px" width="14" height="12" viewBox="0 0 14 12"><path d="M0.700 2.500h12.600v8.800H0.700z" fill="#fff" stroke="#2f7fc4" stroke-width="1.300"></path><path d="M0 0h5.500l1 2.500H0z" fill="#2f7fc4"></path><path d="M3 5l2.800 2L3 9M7 9.200h4" fill="none" stroke="#2f7fc4" stroke-width="1.200"></path></svg>
<svg style="left:412px;top:288px" width="14" height="14"><use href="#gear"></use></svg>
<div class="a" style="left:411px;top:316px;width:14px;height:2px;background-image:linear-gradient(90deg,#b5ad9a 50%,transparent 50%);background-size:4px 2px"></div>
<svg style="left:413px;top:332px" width="12" height="14" viewBox="0 0 12 14"><path d="M0.700 0.700h7.300l3.300 3.300v9.300H0.700z" fill="#fff" stroke="#2f7fc4" stroke-width="1.300"></path><path d="M2.500 8h6M6.500 5.800L8.800 8 6.500 10.200" fill="none" stroke="#2f7fc4" stroke-width="1.200"></path></svg>
<svg style="left:413px;top:354px" width="14" height="15" viewBox="0 0 14 15"><path d="M0.700 0.700h7.300l3.300 3.300v9.300H0.700z" fill="#fff" stroke="#2f7fc4" stroke-width="1.300"></path><rect x="7.500" y="8" width="6.500" height="7" rx="1.200" fill="#d9431e"></rect><path d="M10.750 9.300v3M10.750 13v1" stroke="#fff" stroke-width="1.200"></path></svg>
<svg style="left:413px;top:376px" width="12" height="14" viewBox="0 0 12 14"><path d="M0.700 0.700h7.300l3.300 3.300v9.300H0.700z" fill="#fff" stroke="#2f7fc4" stroke-width="1.300"></path><path d="M3.800 6.500h-1v4.500h1M8.200 6.500h1v4.500h-1M4.700 7.500l2.600 2.600M7.300 7.500l-2.600 2.600" fill="none" stroke="#2f7fc4" stroke-width="0.900"></path></svg>
<svg style="left:412px;top:398px" width="14" height="14" viewBox="0 0 14 14"><rect x="0.600" y="0.600" width="3.800" height="3.800" fill="#fff" stroke="#2f7fc4" stroke-width="1.200"></rect><rect x="0.600" y="9.600" width="3.800" height="3.800" fill="#fff" stroke="#2f7fc4" stroke-width="1.200"></rect><rect x="6.600" y="5.100" width="3" height="3" fill="#fff" stroke="#2f7fc4" stroke-width="1.100"></rect><path d="M7 2.500h7M11 6.600h3M7 11.500h7" stroke="#2f7fc4" stroke-width="1.200"></path></svg>

<!-- sash -->
<div class="a" style="left:407px;top:429px;width:935px;height:1px;background:#8fadd2"></div>
<div class="a" style="left:847px;top:425px;width:55px;height:8px;background:#f8f8f8;border:1px solid #8fadd2;border-radius:2px"></div>
<svg style="left:857px;top:427px" width="34" height="4" viewBox="0 0 34 4"><path d="M0 4l6.500-4 6.500 4zM21 0l6.500 4 6.500-4z" fill="#8fadd2"></path></svg>
<!-- result tabs -->
<div class="a" style="left:407px;top:453px;width:935px;height:1px;background:#a8a8a8"></div>
<div class="a" style="left:407px;top:434px;width:228px;height:20px;background:#fff;border-right:1px solid #c4c4c4"></div>
<div class="a" style="left:408px;top:434px;width:227px;height:2px;background:#1a6fd0"></div>
<svg style="left:413px;top:437.500px" width="11" height="12.500" viewBox="0 0 11 12.500"><path d="M0 0h8l3 3v9.500H0z" fill="#1a8ad8"></path><path d="M1.300 1.300h2v1.800h-2zM4.400 1.300h2.200v1.800H4.400zM1.300 4.200h2v1.800h-2zM4.400 4.200h2.200v1.800H4.400zM7.700 4.200h2v1.800h-2zM1.300 7.100h2v1.800h-2zM4.400 7.100h2.200v1.800H4.400zM7.700 7.100h2v1.800h-2zM1.300 10h2v1.500h-2zM4.400 10h2.200v1.500H4.400zM7.700 10h2v1.500h-2z" fill="#fff"></path></svg>
<span class="t" style="left: 430.5px; top: 436px; letter-spacing: -0.26px;">vista_ventas_agrup_prod_avg(+) 1</span>
<svg style="left:618px;top:440px" width="9" height="9"><use href="#xx"></use></svg>
<!-- filter row -->
<div class="a" style="left:410px;top:458px;width:762px;height:23px;background:#fff;border:1px solid #c2c2c2"></div>
<svg style="left:414px;top:463px" width="15" height="12" viewBox="0 0 15 12"><path d="M2.500 4L0.700 6l1.800 2M4.300 4l1.800 2-1.800 2" fill="none" stroke="#1a8ad8" stroke-width="1"></path><path d="M6.500 1h8M6.500 1v2M14.500 1v2M10.500 1v10M9 11h3" fill="none" stroke="#1a8ad8" stroke-width="1"></path></svg>
<div class="a" style="left:432px;top:459px;width:206px;height:20px;overflow:hidden"><span class="t" style="left: 0px; top: 1.5px; color: rgb(30, 138, 30); letter-spacing: -0.1px;">with prueba as( select va.cod_producto</span></div>
<div class="a" style="left:641px;top:461px;width:1px;height:16px;background:#a0a0a0"></div>
<svg style="left:646px;top:462px" width="15" height="15" viewBox="0 0 15 15"><path d="M0.500 4V0.500H4M0.500 0.500l4.500 4.500M11 0.500h3.500V4M14.500 0.500L10 5M0.500 11v3.500H4M0.500 14.500L5 10M11 14.500h3.500V11M14.500 14.500L10 10" fill="none" stroke="#555" stroke-width="1.200"></path></svg>
<span class="t" style="left: 666px; top: 461.5px; color: rgb(140, 140, 140); letter-spacing: -0.21px;">Enter a SQL expression to filter results (use Ctrl+Space)</span>
<div class="a" style="left:1128px;top:459px;width:43px;height:21px;background:#f4f4f4"></div>
<svg style="left:1132px;top:464px" width="7" height="10" viewBox="0 0 7 10"><path d="M0 0l7 5-7 5z" fill="#7a7a7a"></path></svg>
<div class="a" style="left:1150px;top:462px;width:1px;height:15px;background:#8a8a8a"></div>
<svg style="left:1154px;top:466px" width="11" height="6" viewBox="0 0 11 6"><path d="M0 0h11L5.500 6z" fill="#6a6a6a"></path></svg>
<svg style="left:1182px;top:461px" width="15" height="14" viewBox="0 0 15 14"><path d="M8.500 0.800l5.500 4.500-5.500 6.500H4.500L1 9z" fill="#fff" stroke="#1a7ad0" stroke-width="1.300" stroke-linejoin="round"></path><path d="M5 4.800l5.500 4.500 3.500-4-5.500-4.500z" fill="#1a7ad0"></path><path d="M9 13.500h5" stroke="#1a7ad0" stroke-width="1"></path></svg>
<div class="dd" style="left:1203.500px;top:466px"></div>
<svg style="left:1220px;top:461px" width="12" height="13" viewBox="0 0 12 13"><path d="M0.700 0.700h10.600L7.300 6v6L4.700 10.500V6z" fill="#fff" stroke="#1a7ad0" stroke-width="1.300" stroke-linejoin="round"></path></svg>
<div class="dd" style="left:1241.500px;top:466px"></div>
<svg style="left:1259px;top:462px" width="13" height="12" viewBox="0 0 13 12"><path d="M6 0.700L0.700 6 6 11.300V8.500h6.300V3.500H6z" fill="#f8f8f8" stroke="#9a9a9a" stroke-width="1.200" stroke-linejoin="round"></path></svg>
<div class="dd" style="left:1279.500px;top:466px;border-top-color:#777"></div>
<svg style="left:1296px;top:462px" width="13" height="12" viewBox="0 0 13 12"><path d="M7 0.700L12.300 6 7 11.300V8.500H0.700V3.500H7z" fill="#f8f8f8" stroke="#9a9a9a" stroke-width="1.200" stroke-linejoin="round"></path></svg>
<div class="dd" style="left:1317.500px;top:466px;border-top-color:#777"></div>
<!-- vertical tabs -->
<div class="a" style="left:409px;top:484px;width:20px;height:59px;background:#ececec;border:1px solid #a8a8a8"></div>
<span class="t" style="left:418.500px;top:503px;width:0;height:0;overflow:visible"><span class="t" style="left: 0px; top: 0px; transform: translate(-50%, -50%) rotate(-90deg); letter-spacing: -0.34px;">Grilla</span></span>
<svg style="left:412px;top:522px" width="14" height="14" viewBox="0 0 14 14"><rect x="0.600" y="0.600" width="12.800" height="12.800" fill="#fff" stroke="#1a8ad8" stroke-width="1.200"></rect><path d="M0.600 5h12.800M0.600 9.300h12.800M5 0.600v12.800M9.300 0.600v12.800" stroke="#1a8ad8" stroke-width="1"></path></svg>
<span class="t" style="left:418.500px;top:563px;width:0;height:0;overflow:visible"><span class="t" style="left: 0px; top: 0px; transform: translate(-50%, -50%) rotate(-90deg); letter-spacing: -0.34px;">Texto</span></span>
<svg style="left:412px;top:584px" width="14" height="15" viewBox="0 0 14 15"><g transform="rotate(-90 7 7.500)"><path d="M2 5.500L0.200 7.500l1.800 2M3.800 5.500l1.800 2-1.800 2" fill="none" stroke="#1a8ad8" stroke-width="1"></path><path d="M6 2.500h8M6 2.500v2M14 2.500v2M10 2.500v10M8.500 12.500h3" fill="none" stroke="#1a8ad8" stroke-width="1"></path></g></svg>
<div class="a" style="left:410px;top:606px;width:19px;height:26px;overflow:hidden"><span class="t" style="left:8.500px;top:22.500px;width:0;height:0;overflow:visible"><span class="t" style="left: 0px; top: 0px; transform: translate(-50%, -50%) rotate(-90deg); letter-spacing: -0.11px;">Record</span></span></div>
<!-- grid -->
<div class="a" id="grid" style="left:429px;top:485px;width:872px;height:129px;background:#fff;overflow:hidden">
<div class="a" style="left:0;top:0;width:41px;height:129px;background:#f8f8f8"></div>
<div class="a" style="left:41px;top:26px;width:831px;height:19px;background:#fff"></div>
<div class="a" style="left:2px;top:45px;width:39px;height:1px;background:#6a6a6a"></div>
<span class="t" style="left: 6px; top: 28.5px; letter-spacing: -0.25px; transform: scaleX(0.9332); transform-origin: 0px 50%;">16</span>
<span class="t" style="left: 47.5px; top: 28.5px; letter-spacing: -0.35px;">C11-11079</span>
<div class="a" style="left:180px;top:26px;width:231px;height:19px;overflow:hidden"><span class="t" style="left: 5.5px; top: 2.5px; letter-spacing: -0.25px; transform: scaleX(0.9222); transform-origin: 0px 50%;">ASAR DE CERDO RANCHERO EN PAQUETE</span></div>
<span class="t" style="left: 417.5px; top: 28.5px; letter-spacing: -0.25px; transform: scaleX(0.9424); transform-origin: 0px 50%;">CERDO PORCIONADO</span>
<span class="t" style="left: 600px; top: 28.5px; letter-spacing: -0.25px; transform: scaleX(0.9124); transform-origin: 0px 50%;">PRODUCTOS DE CERDO</span>
<div class="a" style="left:736px;top:26px;width:136px;height:19px;overflow:hidden"><span class="t" style="left: 12px; top: 2.5px; letter-spacing: -0.25px; transform: scaleX(0.9715); transform-origin: 0px 50%;">2017-11-14 00:00:00.000</span></div>
<div class="a" style="left:41px;top:45px;width:831px;height:19px;background:#ebf3fb"></div>
<div class="a" style="left:2px;top:64px;width:39px;height:1px;background:#6a6a6a"></div>
<span class="t" style="left: 6px; top: 47.5px; letter-spacing: -0.25px; transform: scaleX(0.9332); transform-origin: 0px 50%;">17</span>
<span class="t" style="left: 47.5px; top: 47.5px; letter-spacing: -0.35px;">C11-11080</span>
<div class="a" style="left:180px;top:45px;width:231px;height:19px;overflow:hidden"><span class="t" style="left: 5.5px; top: 2.5px; letter-spacing: -0.25px; transform: scaleX(0.9201); transform-origin: 0px 50%;">ASAR DE CERDO PARRILLERO EN PAQUETE</span></div>
<span class="t" style="left: 417.5px; top: 47.5px; letter-spacing: -0.25px; transform: scaleX(0.9424); transform-origin: 0px 50%;">CERDO PORCIONADO</span>
<span class="t" style="left: 600px; top: 47.5px; letter-spacing: -0.25px; transform: scaleX(0.9124); transform-origin: 0px 50%;">PRODUCTOS DE CERDO</span>
<div class="a" style="left:736px;top:45px;width:136px;height:19px;overflow:hidden"><span class="t" style="left: 12px; top: 2.5px; letter-spacing: -0.25px; transform: scaleX(0.9715); transform-origin: 0px 50%;">2017-11-14 00:00:00.000</span></div>
<div class="a" style="left:41px;top:64px;width:831px;height:19px;background:#fff"></div>
<div class="a" style="left:2px;top:83px;width:39px;height:1px;background:#6a6a6a"></div>
<span class="t" style="left: 6px; top: 66.5px; letter-spacing: -0.25px; transform: scaleX(0.9332); transform-origin: 0px 50%;">18</span>
<span class="t" style="left: 47.5px; top: 66.5px; letter-spacing: -0.35px;">C11-11091</span>
<div class="a" style="left:180px;top:64px;width:231px;height:19px;overflow:hidden"><span class="t" style="left: 5.5px; top: 2.5px; letter-spacing: -0.25px; transform: scaleX(0.9568); transform-origin: 0px 50%;">MOLIDA DE LOMO DE CERDO (C)</span></div>
<span class="t" style="left: 417.5px; top: 66.5px; letter-spacing: -0.25px; transform: scaleX(0.9178); transform-origin: 0px 50%;">VARIOS PRODUCTOS DE CERDO</span>
<span class="t" style="left: 600px; top: 66.5px; letter-spacing: -0.25px; transform: scaleX(0.9124); transform-origin: 0px 50%;">PRODUCTOS DE CERDO</span>
<div class="a" style="left:736px;top:64px;width:136px;height:19px;overflow:hidden"><span class="t" style="left: 12px; top: 2.5px; letter-spacing: -0.25px; transform: scaleX(0.9648); transform-origin: 0px 50%;">2024-05-06 00:00:00.000</span></div>
<div class="a" style="left:41px;top:83px;width:831px;height:19px;background:#ebf3fb"></div>
<div class="a" style="left:2px;top:102px;width:39px;height:1px;background:#6a6a6a"></div>
<span class="t" style="left: 6px; top: 85.5px; letter-spacing: -0.25px; transform: scaleX(0.9332); transform-origin: 0px 50%;">19</span>
<span class="t" style="left: 47.5px; top: 85.5px; letter-spacing: -0.25px; transform: scaleX(0.9538); transform-origin: 0px 50%;">C12-12000</span>
<div class="a" style="left:180px;top:83px;width:231px;height:19px;overflow:hidden"><span class="t" style="left: 5.5px; top: 2.5px; letter-spacing: -0.25px; transform: scaleX(0.9182); transform-origin: 0px 50%;">CHULETA DE CERDO POPULAR DEL CORRAL</span></div>
<span class="t" style="left: 417.5px; top: 85.5px; letter-spacing: -0.25px; transform: scaleX(0.9305); transform-origin: 0px 50%;">CHULETA DE CERDO</span>
<span class="t" style="left: 600px; top: 85.5px; letter-spacing: -0.25px; transform: scaleX(0.9124); transform-origin: 0px 50%;">PRODUCTOS DE CERDO</span>
<div class="a" style="left:736px;top:83px;width:136px;height:19px;overflow:hidden"><span class="t" style="left: 12px; top: 2.5px; letter-spacing: -0.25px; transform: scaleX(0.9648); transform-origin: 0px 50%;">2015-01-15 00:00:00.000</span></div>
<div class="a" style="left:41px;top:102px;width:831px;height:19px;background:#fff"></div>
<div class="a" style="left:2px;top:121px;width:39px;height:1px;background:#6a6a6a"></div>
<span class="t" style="left: 6px; top: 104.5px; letter-spacing: -0.25px; transform: scaleX(0.9332); transform-origin: 0px 50%;">20</span>
<span class="t" style="left: 47.5px; top: 104.5px; letter-spacing: -0.25px; transform: scaleX(0.9538); transform-origin: 0px 50%;">C12-12002</span>
<div class="a" style="left:180px;top:102px;width:231px;height:19px;overflow:hidden"><span class="t" style="left: 5.5px; top: 2.5px; letter-spacing: -0.25px; transform: scaleX(0.9458); transform-origin: 0px 50%;">CHULETA DE CERDO POPULAR CORTADA</span></div>
<span class="t" style="left: 417.5px; top: 104.5px; letter-spacing: -0.25px; transform: scaleX(0.9305); transform-origin: 0px 50%;">CHULETA DE CERDO</span>
<span class="t" style="left: 600px; top: 104.5px; letter-spacing: -0.25px; transform: scaleX(0.9124); transform-origin: 0px 50%;">PRODUCTOS DE CERDO</span>
<div class="a" style="left:736px;top:102px;width:136px;height:19px;overflow:hidden"><span class="t" style="left: 12px; top: 2.5px; letter-spacing: -0.25px; transform: scaleX(0.9648); transform-origin: 0px 50%;">2015-01-15 00:00:00.000</span></div>
<div class="a" style="left:41px;top:121px;width:831px;height:19px;background:#ebf3fb"></div>
<div class="a" style="left:2px;top:140px;width:39px;height:1px;background:#6a6a6a"></div>
<span class="t" style="left: 6px; top: 123.5px; letter-spacing: -0.25px; transform: scaleX(0.9332); transform-origin: 0px 50%;">21</span>
<span class="t" style="left: 47.5px; top: 123.5px; letter-spacing: -0.25px; transform: scaleX(0.9538); transform-origin: 0px 50%;">C12-12008</span>
<div class="a" style="left:180px;top:121px;width:231px;height:19px;overflow:hidden"><span class="t" style="left: 5.5px; top: 2.5px; letter-spacing: -0.25px; transform: scaleX(0.9449); transform-origin: 0px 50%;">LOMITO CORTO DE CERDO</span></div>
<span class="t" style="left: 417.5px; top: 123.5px; letter-spacing: -0.25px; transform: scaleX(0.9315); transform-origin: 0px 50%;">LOMO DE CERDO</span>
<span class="t" style="left: 600px; top: 123.5px; letter-spacing: -0.25px; transform: scaleX(0.9124); transform-origin: 0px 50%;">PRODUCTOS DE CERDO</span>
<div class="a" style="left:736px;top:121px;width:136px;height:19px;overflow:hidden"><span class="t" style="left: 12px; top: 2.5px; letter-spacing: -0.25px; transform: scaleX(0.9648); transform-origin: 0px 50%;">2015-01-15 00:00:00.000</span></div>
<div class="a" style="left:0;top:0;width:872px;height:25px;background:#fbfbfb"></div>
<div class="a" style="left:41px;top:0;width:139px;height:25px;background:#7ab8ea"></div>
<div class="a" style="left:2px;top:26px;width:39px;height:1px;background:#6a6a6a"></div>
<div class="a" style="left:41px;top:24.500px;width:831px;height:1.500px;background:#e5603a"></div>
<div class="a" style="left:41px;top:0;width:1px;height:129px;background:#5a5a5a"></div>
<div class="a" style="left:179px;top:26px;width:1px;height:103px;background:#e6e6e6"></div>
<div class="a" style="left:411px;top:0;width:1px;height:24px;background:#5a5a5a"></div>
<div class="a" style="left:411px;top:26px;width:1px;height:103px;background:#e6e6e6"></div>
<div class="a" style="left:594px;top:0;width:1px;height:24px;background:#5a5a5a"></div>
<div class="a" style="left:594px;top:26px;width:1px;height:103px;background:#e6e6e6"></div>
<div class="a" style="left:735px;top:0;width:1px;height:24px;background:#5a5a5a"></div>
<div class="a" style="left:735px;top:26px;width:1px;height:103px;background:#e6e6e6"></div>
<svg style="left:26px;top:8px" width="10" height="10" viewBox="0 0 10 10"><circle cx="5" cy="5" r="4.200" fill="#fff" stroke="#f08a24" stroke-width="1.100"></circle><circle cx="5" cy="5" r="1.800" fill="#f08a24"></circle></svg>
<span class="t" style="left: 49px; top: 3px; font-size: 10px; font-weight: bold; color: rgb(47, 143, 216); letter-spacing: -0.25px; transform: scaleX(0.9107); transform-origin: 0px 50%;">A-Z</span><span class="t" style="left: 67.5px; top: 2.5px; letter-spacing: 0.02px;">cod_producto</span><svg style="left:160px;top:8px" width="11" height="6" viewBox="0 0 11 6"><path d="M0 0h11L5.500 6z" fill="#1a8ad8"></path></svg>
<span class="t" style="left: 187px; top: 3px; font-size: 10px; font-weight: bold; color: rgb(47, 143, 216); letter-spacing: -0.25px; transform: scaleX(0.9107); transform-origin: 0px 50%;">A-Z</span><span class="t" style="left: 205.5px; top: 2.5px; letter-spacing: -0.13px;">desc_producto</span><svg style="left:392.5px;top:8px" width="11" height="6" viewBox="0 0 11 6"><path d="M0 0h11L5.500 6z" fill="#1a8ad8"></path></svg>
<span class="t" style="left: 419px; top: 3px; font-size: 10px; font-weight: bold; color: rgb(47, 143, 216); letter-spacing: -0.25px; transform: scaleX(0.9107); transform-origin: 0px 50%;">A-Z</span><span class="t" style="left: 437.5px; top: 2.5px; letter-spacing: -0.15px;">categoria</span><svg style="left:576px;top:8px" width="11" height="6" viewBox="0 0 11 6"><path d="M0 0h11L5.500 6z" fill="#1a8ad8"></path></svg>
<span class="t" style="left: 602px; top: 3px; font-size: 10px; font-weight: bold; color: rgb(47, 143, 216); letter-spacing: -0.25px; transform: scaleX(0.9107); transform-origin: 0px 50%;">A-Z</span><span class="t" style="left: 620.5px; top: 2.5px; letter-spacing: -0.41px;">especie</span><svg style="left:717px;top:8px" width="11" height="6" viewBox="0 0 11 6"><path d="M0 0h11L5.500 6z" fill="#1a8ad8"></path></svg>
<svg style="left:743px;top:5px" width="14" height="14" viewBox="0 0 14 14"><circle cx="7" cy="7" r="6.200" fill="#fff" stroke="#2f8fd8" stroke-width="1.200"></circle><path d="M7 3v4.500L4.500 10" fill="none" stroke="#2f8fd8" stroke-width="1.200"></path></svg>
<span class="t" style="left: 761px; top: 2.5px; letter-spacing: -0.21px;">fecha_creacion</span><svg style="left:859.5px;top:8px" width="11" height="6" viewBox="0 0 11 6"><path d="M0 0h11L5.500 6z" fill="#1a8ad8"></path></svg>
</div>
<!-- grid v scroll -->
<div class="a" style="left:1301px;top:485px;width:17px;height:147px;background:#f0f0f0"></div>
<div class="a" style="left:1309px;top:507px;width:3px;height:17px;background:#7a7a7a;border-radius:1px"></div>
<!-- grid h scroll -->
<div class="a" style="left:429px;top:614px;width:872px;height:18px;background:#f0f0f0"></div>
<div class="a" style="left:448px;top:622.500px;width:580px;height:2.500px;background:#7a7a7a;border-radius:1px"></div>
<!-- panels strip -->
<svg style="left:1322px;top:490px" width="16" height="16" viewBox="0 0 16 16"><rect x="2" y="0.600" width="13.400" height="13" fill="#62c0ee" stroke="#1a7ad0" stroke-width="1.200"></rect><rect x="2" y="0.600" width="6" height="6" fill="#fff" stroke="#1a7ad0" stroke-width="1.200"></rect><circle cx="3.500" cy="12" r="2.600" fill="#fff" stroke="#1a7ad0" stroke-width="1.300"></circle><path d="M3.500 8v8M-0.500 12h8M0.700 9.200l5.600 5.600M6.300 9.200L0.700 14.800" stroke="#1a7ad0" stroke-width="0.900"></path></svg>
<span class="t" style="left:1330px;top:526px;width:0;height:0;overflow:visible"><span class="t" style="left: 0px; top: 0px; transform: translate(-50%, -50%) rotate(90deg); letter-spacing: -0.62px;">Panels</span></span>
<svg style="left:1322px;top:554px" width="16" height="16" viewBox="0 0 16 16"><circle cx="8" cy="8" r="7" fill="#fff" stroke="#1a8ad8" stroke-width="1.400"></circle><circle cx="5.800" cy="5.800" r="1.100" fill="#1a8ad8"></circle><circle cx="10.200" cy="5.800" r="1.100" fill="#1a8ad8"></circle><circle cx="5.800" cy="10.200" r="1.100" fill="#1a8ad8"></circle><circle cx="10.200" cy="10.200" r="1.100" fill="#1a8ad8"></circle></svg>
<svg style="left:1323px;top:577px" width="15" height="14" viewBox="0 0 15 14"><rect x="0.600" y="0.600" width="5" height="4.500" rx="1.500" fill="#fff" stroke="#1a7ad0" stroke-width="1.100"></rect><rect x="8.600" y="0.600" width="5" height="4.500" rx="1.500" fill="#fff" stroke="#1a7ad0" stroke-width="1.100"></rect><circle cx="3.100" cy="10.500" r="2.600" fill="#fff" stroke="#1a7ad0" stroke-width="1.100"></circle><path d="M1.500 9l3.200 3M4.700 9l-3.200 3" stroke="#1a7ad0" stroke-width="0.900"></path><circle cx="11.100" cy="10.500" r="2.600" fill="#fff" stroke="#f07f0c" stroke-width="1.100"></circle><path d="M9.500 10.500h3.200" stroke="#f07f0c" stroke-width="1.400"></path></svg>
<svg style="left:1323px;top:599px" width="15" height="14" viewBox="0 0 15 14"><rect x="0.600" y="0.600" width="13.800" height="12.800" fill="#fff" stroke="#1a7ad0" stroke-width="1.200"></rect><path d="M2 2h2v2H2zM6 2h2v2H6zM10 2h2v2h-2zM4 4h2v2H4zM8 4h2v2H8zM12 4h1.500v2H12zM2 6h2v2H2zM6 6h2v2H6zM10 6h2v2h-2zM4 8h2v2H4zM8 8h2v2H8zM12 8h1.500v2H12zM2 10h2v2H2zM6 10h2v2H6zM10 10h2v2h-2z" fill="#1a7ad0"></path></svg>
<div class="a" style="left:1322px;top:619px;width:16px;height:13px;overflow:hidden"><svg style="left:0;top:0" width="16" height="16" viewBox="0 0 16 16"><path d="M8 0v4M6 2h4" stroke="#f07f0c" stroke-width="1.200"></path><rect x="1" y="5.500" width="14" height="10" fill="#62c0ee" stroke="#1a7ad0" stroke-width="1.200"></rect><path d="M1 9h14M5.500 9v6M10.500 9v6" stroke="#1a7ad0" stroke-width="1.100"></path><path d="M1 5.500h14V8H1z" fill="#1a7ad0"></path></svg></div>

<!-- bottom toolbar -->
<svg style="left:415px;top:642px" width="15" height="15" viewBox="0 0 15 15"><path d="M1.500 9A6 6 0 0 1 12 3.500M13.500 6A6 6 0 0 1 3 11.500" fill="none" stroke="#1a7ad0" stroke-width="1.300"></path><path d="M12.800 0.500v3.800H9zM2.200 14.500v-3.800H6z" fill="#1a7ad0"></path><path d="M4.500 7.500l3-2.500 3 2.500-3 2.500z" fill="#fff" stroke="#1a7ad0" stroke-width="1.100"></path></svg>
<span class="t" style="left: 434.5px; top: 642px; letter-spacing: -0.34px;">Renovar</span>
<div class="dd" style="left:490px;top:648px"></div>
<div class="hd" style="left:508px;top:643px;height:14px"></div>
<svg style="left:518px;top:642px" width="15" height="15" viewBox="0 0 15 15"><circle cx="7.500" cy="7.500" r="6.700" fill="none" stroke="#9a9a9a" stroke-width="1.200"></circle><path d="M4.300 7.800l2.300 2.300 4.200-4.600" fill="none" stroke="#9a9a9a" stroke-width="1.300"></path></svg>
<span class="t" style="left: 538.5px; top: 642px; color: rgb(157, 157, 157); letter-spacing: -0.25px; transform: scaleX(0.8726); transform-origin: 0px 50%;">Save</span>
<div class="dd" style="left:575px;top:648px;border-top-color:#555"></div>
<svg style="left:591px;top:643px" width="13" height="13" viewBox="0 0 13 13"><rect x="0.600" y="0.600" width="11.800" height="11.800" fill="none" stroke="#9a9a9a" stroke-width="1.200"></rect><path d="M3.500 3.500l6 6M9.500 3.500l-6 6" stroke="#9a9a9a" stroke-width="1.100"></path></svg>
<span class="t" style="left: 610px; top: 642px; color: rgb(157, 157, 157); letter-spacing: -0.31px;">Cancel</span>
<div class="hd" style="left:656px;top:643px;height:14px"></div>
<svg style="left:665px;top:644px" width="16" height="13" viewBox="0 0 16 13"><path d="M0 1h15M0 5.500h15M0 10h7" stroke="#1a7ad0" stroke-width="1.700"></path><path d="M9 12.500l5-5 1.500 1.500-5 5H9z" fill="#1a7ad0"></path></svg>
<svg style="left:688px;top:644px" width="16" height="13" viewBox="0 0 16 13"><path d="M0 1h14M0 5.500h8M0 10h8" stroke="#8a8a8a" stroke-width="1.600"></path><path d="M13 5v8M9 9h8" stroke="#8a8a8a" stroke-width="1.500"></path></svg>
<svg style="left:712px;top:644px" width="16" height="13" viewBox="0 0 16 13"><path d="M0 1h14" stroke="#8a8a8a" stroke-width="1.300"></path><path d="M0 5.500h4M0 10h4" stroke="#8a8a8a" stroke-width="1.600" stroke-dasharray="2 1.200"></path><rect x="6.500" y="4" width="9" height="8.500" rx="2.500" fill="none" stroke="#8a8a8a" stroke-width="1.100"></rect><path d="M11 6v4.500M8.800 8.200h4.400" stroke="#8a8a8a" stroke-width="1"></path></svg>
<svg style="left:737px;top:644px" width="16" height="13" viewBox="0 0 16 13"><path d="M0 1h14M0 5.500h6M0 10h6" stroke="#8a8a8a" stroke-width="1.600"></path><path d="M8 5.500h7M8 10h8" stroke="#8a8a8a" stroke-width="1.400"></path></svg>
<div class="hd" style="left:761px;top:643px;height:14px"></div>
<svg style="left:769px;top:643px" width="13" height="14" viewBox="0 0 13 14"><path d="M1 0v14" stroke="#8a8a8a" stroke-width="2"></path><path d="M12 1L5 7l7 6" fill="none" stroke="#8a8a8a" stroke-width="2"></path></svg>
<svg style="left:795px;top:643px" width="8" height="14" viewBox="0 0 8 14"><path d="M7.500 1L1 7l6.500 6" fill="none" stroke="#8a8a8a" stroke-width="2"></path></svg>
<svg style="left:819px;top:643px" width="8" height="14" viewBox="0 0 8 14"><path d="M0.500 1L7 7l-6.500 6" fill="none" stroke="#1481d6" stroke-width="2.200"></path></svg>
<svg style="left:839px;top:643px" width="13" height="14" viewBox="0 0 13 14"><path d="M12 0v14" stroke="#1481d6" stroke-width="2.200"></path><path d="M1 1l7 6-7 6" fill="none" stroke="#1481d6" stroke-width="2.200"></path></svg>
<svg style="left:861px;top:643px" width="15" height="14" viewBox="0 0 15 14"><path d="M0.700 4V0.700H4M11 0.700h3.300V4M0.700 10v3.300H4M11 13.300h3.300V10" fill="none" stroke="#1a7ad0" stroke-width="1.400"></path><rect x="4" y="3.500" width="7" height="7" fill="#fff" stroke="#1a7ad0" stroke-width="1.200"></rect><rect x="6" y="5.500" width="3" height="3" fill="#1a7ad0"></rect></svg>
<div class="hd" style="left:888px;top:643px;height:14px"></div>
<svg style="left:900px;top:642px" width="14" height="15" viewBox="0 0 14 15"><path d="M0.700 8.500v5.800h12.600V8.500" fill="none" stroke="#1a7ad0" stroke-width="1.400"></path><path d="M7 11V2" stroke="#1a7ad0" stroke-width="1.500"></path><path d="M3.500 4.500L7 0.800l3.500 3.700" fill="none" stroke="#1a7ad0" stroke-width="1.500"></path></svg>
<span class="t" style="left: 919px; top: 642px; letter-spacing: -0.24px;">Exportar datos ...</span>
<div class="dd" style="left:1019.500px;top:648px"></div>
<div class="hd" style="left:1036.500px;top:643px;height:14px"></div>
<svg style="left:1043px;top:642px" width="15" height="15"><use href="#gear"></use></svg>
<div class="a" style="left:1066px;top:639px;width:57px;height:21px;background:#fff;border:1px solid #e0e0e0;border-bottom:1px solid #8a8a8a"></div>
<span class="t" style="left: 1072px; top: 642px; letter-spacing: -0.34px;">200</span>
<svg style="left:1130px;top:642px" width="15" height="15" viewBox="0 0 15 15"><path d="M1 0.800h13M2 0.800l5.500 6 5.500-6M7.500 6.800V10" fill="none" stroke="#1a7ad0" stroke-width="1.400"></path><path d="M0.700 9.500v4.800h13.600V9.500" fill="none" stroke="#1a7ad0" stroke-width="1.400"></path></svg>
<span class="t" style="left: 1152.5px; top: 642px; letter-spacing: -0.25px; transform: scaleX(0.9604); transform-origin: 0px 50%;">200+</span>
<div class="hd" style="left:1187.500px;top:643px;height:14px"></div>
<!-- status line -->
<div class="a" style="left:416px;top:678px;width:8px;height:1px;background-image:linear-gradient(90deg,#4a5590 34%,transparent 34%);background-size:3px 1px"></div>
<span class="t" style="left: 435px; top: 670.5px; letter-spacing: -0.29px;">200 row(s) fetched - 0.665s, on 2025-06-12 at 13:45:25</span>
<!-- right strip -->
<div class="a" style="left:1347px;top:75px;width:14px;height:2px;background-image:linear-gradient(90deg,#b5ad9a 50%,transparent 50%);background-size:4px 2px"></div>
<svg style="left:1350px;top:85px" width="9" height="8" viewBox="0 0 9 8"><rect x="2.500" y="0.500" width="6" height="4" fill="#f5f5f5" stroke="#a89c84" stroke-width="1"></rect><rect x="0.500" y="3" width="6" height="4.500" fill="#f5f5f5" stroke="#a89c84" stroke-width="1"></rect></svg>
<svg style="left:1347px;top:104px" width="15" height="14" viewBox="0 0 15 14"><g fill="#1a8ad8"><ellipse cx="6.500" cy="2.800" rx="6" ry="2.600"></ellipse><path d="M0.500 4.800c0 3 12 3 12 0v2c0 3-12 3-12 0z"></path><path d="M0.500 8.600c0 3 12 3 12 0v2c0 3.200-12 3.200-12 0z"></path></g><rect x="8" y="9" width="7" height="5" fill="#f5f5f5"></rect><path d="M9 10.500h2M12 10.500h2M9 13h2M12 13h2" stroke="#f07f0c" stroke-width="1.300"></path></svg>

<!-- status bar -->
<div class="vs" style="left:597px;top:694px;height:22px;background:#909090"></div>
<span class="t" style="left: 605px; top: 697px; letter-spacing: -0.25px; transform: scaleX(0.8817); transform-origin: 0px 50%;">CST</span>
<div class="vs" style="left:632px;top:694px;height:22px;background:#909090"></div>
<span class="t" style="left: 640px; top: 697px; letter-spacing: -0.25px; transform: scaleX(0.9436); transform-origin: 0px 50%;">es</span>
<div class="vs" style="left:657px;top:694px;height:22px;background:#909090"></div>
<span class="t" style="left: 665px; top: 697px; letter-spacing: -0.17px;">Editable</span>
<div class="vs" style="left:791px;top:694px;height:22px;background:#909090"></div>
<span class="t" style="left: 798.5px; top: 697px; letter-spacing: 0.01px;">Inserción inteligente</span>
<div class="vs" style="left:919px;top:694px;height:22px;background:#909090"></div>
<span class="t" style="left: 927px; top: 697px; letter-spacing: -0.25px; transform: scaleX(0.9481); transform-origin: 0px 50%;">4 : 5 : 163</span>
<div class="vs" style="left:1047px;top:694px;height:22px;background:#909090"></div>
<span class="t" style="left: 1055px; top: 697px; letter-spacing: -0.25px; transform: scaleX(0.896); transform-origin: 0px 50%;">S...0</span>
<div class="hd" style="left:1081px;top:699px;height:14px"></div>
<!-- taskbar -->
<svg style="left:22px;top:733px" width="24" height="24" viewBox="0 0 24 24"><circle cx="9" cy="11" r="8.500" fill="#f7a823"></circle><path d="M5 23.500a4.500 4.500 0 0 1 0.500-9 6 6 0 0 1 11.300 1.200 4 4 0 0 1 0.700 7.800z" fill="#b4cff2" stroke="#7fa8e0" stroke-width="0.800"></path></svg>
<div class="a" style="left:30px;top:728px;width:18px;height:14px;background:#fbfbf9;border-radius:4px"></div>
<span class="t" style="left: 32px; top: 727px; font-size: 11px; letter-spacing: -0.25px; transform: scaleX(0.881); transform-origin: 0px 50%;">28°</span>
<svg style="left:187px;top:733px" width="24" height="24" viewBox="0 0 24 24"><defs><linearGradient id="wl" x1="0" y1="0" x2="1" y2="1"><stop offset="0" stop-color="#5fd0ff"></stop><stop offset="1" stop-color="#0a74d4"></stop></linearGradient></defs><path d="M0 0h11.300v11.300H0zM12.700 0H24v11.300H12.700zM0 12.700h11.300V24H0zM12.700 12.700H24V24H12.700z" fill="url(#wl)"></path></svg>
<div class="a" style="left:224px;top:728px;width:218px;height:32px;background:#fbfbfa;border:1px solid #dededb;border-radius:16px"></div>
<svg style="left:235px;top:737px" width="16" height="16" viewBox="0 0 16 16"><circle cx="6.500" cy="6.500" r="5.300" fill="none" stroke="#2a2a2a" stroke-width="1.700"></circle><path d="M10.500 10.500l4.500 4.500" stroke="#2a2a2a" stroke-width="1.900" stroke-linecap="round"></path></svg>
<span class="t" style="left: 260px; top: 735px; font-size: 14px; line-height: 18px; height: 18px; color: rgb(90, 90, 90); letter-spacing: -0.38px;">Búsqueda</span>
<!-- task view -->
<svg style="left:454px;top:732px" width="26" height="24" viewBox="0 0 26 24"><rect x="9" y="1" width="16" height="15" rx="2" fill="#fcfcfc" stroke="#e0e0e0" stroke-width="0.600"></rect><rect x="0.500" y="6" width="17" height="16" rx="2" fill="#2b2b2b"></rect><rect x="9" y="6" width="8.500" height="10" fill="#8e8e8e"></rect></svg>
<!-- m365 -->
<svg style="left:499px;top:731px" width="25" height="26" viewBox="0 0 25 26"><defs><linearGradient id="m3" x1="0" y1="0" x2="1" y2="1"><stop offset="0" stop-color="#2fb8e8"></stop><stop offset="0.450" stop-color="#5a6af0"></stop><stop offset="0.750" stop-color="#c25ae8"></stop><stop offset="1" stop-color="#f0a060"></stop></linearGradient></defs><path d="M7 2.500q1-2 3-2h7q2 0 2.500 2l4.500 14q0.500 2.500-2 2.500h-4.500q-2 0-2.500-2L11 4z" fill="url(#m3)"></path><path d="M1.500 16L6 4q0.700-2 3-2h3.500q2 0 1.500 2.500L10 17q-0.700 2-3 2H3.500q-2.500 0-2-3z" fill="url(#m3)" opacity="0.900"></path><rect x="4" y="17.500" width="20" height="8" rx="1" fill="#1a1a1a"></rect><text x="14" y="24.300" font-family="Liberation Sans, sans-serif" font-size="7.500" font-weight="bold" fill="#fff" text-anchor="middle">M365</text></svg>
<!-- explorer -->
<svg style="left:543px;top:732px" width="25" height="24" viewBox="0 0 25 24"><path d="M0 3q0-1.500 1.500-1.500h6L10 4h13.500Q25 4 25 5.500V8H0z" fill="#e8a400"></path><rect x="0" y="5.500" width="25" height="17.500" rx="1.500" fill="#ffd04a"></rect><path d="M0 13h25v8.500q0 1.500-1.500 1.500h-22Q0 23 0 21.500z" fill="#f8b820"></path><rect x="7.500" y="16.500" width="10" height="6.500" rx="1" fill="#2a8fe0"></rect></svg>
<!-- store -->
<svg style="left:587px;top:732px" width="24" height="24" viewBox="0 0 24 24"><path d="M8 5V3.500Q8 1 10.500 1h3Q16 1 16 3.500V5" fill="none" stroke="#3a8ad8" stroke-width="1.800"></path><rect x="0.500" y="5" width="23" height="18.500" rx="3" fill="#1a4f9a"></rect><rect x="7" y="9" width="4.500" height="4.500" fill="#f25022"></rect><rect x="12.500" y="9" width="4.500" height="4.500" fill="#7fba00"></rect><rect x="7" y="14.500" width="4.500" height="4.500" fill="#00a4ef"></rect><rect x="12.500" y="14.500" width="4.500" height="4.500" fill="#ffb900"></rect></svg>
<!-- outlook -->
<svg style="left:630px;top:732px" width="26" height="24" viewBox="0 0 26 24"><path d="M9 3L18 0.500 26 5v14l-8 4.500-9-2z" fill="#1a7ad8"></path><path d="M14 8l12-3v14l-12 3z" fill="#4ab4f4"></path><path d="M12 13l14 6-8 4.500-6-1.500z" fill="#0f5fb8"></path><rect x="0" y="5.500" width="15" height="14" rx="1.500" fill="#0f6cc8"></rect><ellipse cx="7.500" cy="12.500" rx="3.500" ry="4" fill="none" stroke="#fff" stroke-width="1.800"></ellipse></svg>
<!-- edge -->
<svg style="left:675px;top:731px" width="26" height="26" viewBox="0 0 26 26"><defs><linearGradient id="eg" x1="0" y1="0" x2="1" y2="1"><stop offset="0" stop-color="#35c08a"></stop><stop offset="0.500" stop-color="#1f9ad8"></stop><stop offset="1" stop-color="#1560c0"></stop></linearGradient></defs><path d="M13 1a12 12 0 0 1 12 11c0 4-3 6-6 6-3.500 0-4-2-3-3.500 1-2-1.500-5.500-5.500-5C6 10 3.500 14 4.500 18.500A12 12 0 0 1 13 1z" fill="url(#eg)"></path><path d="M4.500 18.500C5.500 23 10 25.500 14 25c4-0.500 7-2.500 9-6-3 2-8 2-10.500-1S11 11 14 9.800C9 8.500 3 12 4.500 18.500z" fill="#1560c0"></path><rect x="2" y="15" width="13" height="9.500" rx="1.500" fill="#8a5a2a"></rect><rect x="2" y="15" width="13" height="4.500" rx="1.500" fill="#a87038"></rect><path d="M6 15v-1.500h5V15" fill="none" stroke="#5a3a1a" stroke-width="1.300"></path><rect x="7.500" y="18.500" width="2" height="2" fill="#f0d080"></rect></svg>
<div class="a" style="left:684px;top:760px;width:6px;height:3px;background:#8c8c8c;border-radius:1.500px"></div>
<!-- db tool -->
<svg style="left:721px;top:731px" width="21" height="26" viewBox="0 0 21 26"><defs><linearGradient id="dz" x1="0" y1="0" x2="0" y2="1"><stop offset="0" stop-color="#1aa8f8"></stop><stop offset="1" stop-color="#0a5ac8"></stop></linearGradient></defs><path d="M1 3.500C1 0.500 20 0.500 20 3.500c0 4.500-7 6-7 9.500s7 5 7 9.500C20 25.500 1 25.500 1 22.500c0-4.500 7-6 7-9.500S1 8 1 3.500z" fill="url(#dz)"></path><ellipse cx="10.500" cy="3.500" rx="8" ry="2" fill="#8adcff"></ellipse><path d="M3 9c3 2.500 12 2.500 15 0M3 17c3-2.500 12-2.500 15 0" fill="none" stroke="#bfeaff" stroke-width="1.500"></path></svg>
<div class="a" style="left:728px;top:760px;width:6px;height:3px;background:#8c8c8c;border-radius:1.500px"></div>
<!-- teams -->
<svg style="left:762px;top:729px" width="30" height="28" viewBox="0 0 30 28"><circle cx="20" cy="9" r="3.500" fill="#5b5fc7"></circle><path d="M13 13h12v8a5 5 0 0 1-5 5h-2a5 5 0 0 1-5-5z" fill="#7b83eb"></path><circle cx="13.500" cy="8" r="4.500" fill="#7b83eb"></circle><path d="M6 13h13v8.500a5.500 5.500 0 0 1-5.500 5.500h-2A5.500 5.500 0 0 1 6 21.500z" fill="#5b5fc7"></path><rect x="0" y="9" width="13" height="13" rx="1.500" fill="#4b53bc"></rect><path d="M3.500 12.500h6M6.500 12.500v7" stroke="#fff" stroke-width="1.700"></path><circle cx="21.500" cy="6.500" r="7" fill="#c42b1c"></circle><text x="21.500" y="10.500" font-family="Liberation Sans, sans-serif" font-size="11" fill="#fff" text-anchor="middle">2</text></svg>
<div class="a" style="left:772px;top:760px;width:6px;height:3px;background:#8c8c8c;border-radius:1.500px"></div>
<!-- dbeaver active -->
<div class="a" style="left:800px;top:725px;width:38px;height:38px;background:#f9f8f6;border:1px solid #e9e8e4;border-radius:4px"></div>
<svg style="left:806px;top:731px" width="26" height="26" viewBox="0 0 26 26"><circle cx="12.900" cy="13.050" r="11" fill="#fff" stroke="#3fb0bc" stroke-width="2"></circle><path d="M9.300 21.300l2.200-6.300c1.500 1.200 3.200 1.800 4.800 1.700l0.700-2.800 0.900 2.500 1.200-3.200c0.300 2.300-0.200 4.800-0.900 6.500-2.600 2-6.200 2.600-8.900 1.600z" fill="#33221d"></path><ellipse cx="16.800" cy="9.200" rx="2.100" ry="1.200" transform="rotate(-18 16.800 9.200)" fill="#33221d"></ellipse><circle cx="11.300" cy="8" r="0.700" fill="#4a3a34"></circle><path d="M4.600 9.600c0.800-0.900 1.800-1 2.200-0.200-0.700 1.900-0.900 4-1.900 5.900-0.600-1.800-0.700-3.900-0.300-5.700z" fill="#3f2c26"></path><path d="M6.800 8.200c1.500-2.300 3.600-3.700 6.200-3.900" fill="none" stroke="#5a4a44" stroke-width="0.600"></path><path d="M15.700 17.200l1.100-1.200 0.400 1.600z" fill="#fff"></path></svg>
<div class="a" style="left:811px;top:760px;width:16px;height:3px;background:#0a6ad8;border-radius:1.500px"></div>
<!-- power bi -->
<svg style="left:851px;top:731px" width="24" height="26" viewBox="0 0 24 26"><rect x="0" y="0" width="9" height="26" fill="#2a6ad0"></rect><rect x="9" y="0" width="15" height="26" rx="1" fill="#f2c811"></rect><rect x="4" y="7" width="11" height="19" rx="1" fill="#e8a600"></rect><rect x="0" y="14" width="9" height="12" rx="1" fill="#f8d84a"></rect></svg>
<div class="a" style="left:860px;top:760px;width:6px;height:3px;background:#8c8c8c;border-radius:1.500px"></div>
<!-- lock -->
<svg style="left:898px;top:732px" width="19" height="24" viewBox="0 0 19 24"><path d="M4.500 11V6.500a5 5 0 0 1 10 0V11" fill="none" stroke="#d8b820" stroke-width="2.800"></path><rect x="0.500" y="10" width="18" height="13.500" rx="2" fill="#f2d02a" stroke="#b89a10" stroke-width="0.800"></rect><circle cx="9.500" cy="15.500" r="1.800" fill="#6a5a10"></circle><path d="M9.500 16v4" stroke="#6a5a10" stroke-width="1.600"></path></svg>
<div class="a" style="left:904px;top:760px;width:6px;height:3px;background:#8c8c8c;border-radius:1.500px"></div>
<!-- purple q -->
<svg style="left:940px;top:734px" width="21" height="21" viewBox="0 0 21 21"><rect width="21" height="21" rx="4" fill="#3b1a96"></rect><circle cx="10" cy="10" r="5" fill="none" stroke="#fff" stroke-width="2.400"></circle><path d="M12 12l4.500 4.500" stroke="#fff" stroke-width="2.400"></path><circle cx="4" cy="4" r="0.800" fill="#fff"></circle><circle cx="16.500" cy="5" r="0.800" fill="#fff"></circle></svg>
<div class="a" style="left:948px;top:760px;width:6px;height:3px;background:#8c8c8c;border-radius:1.500px"></div>
<!-- tray -->
<svg style="left:1042px;top:740px" width="11" height="7" viewBox="0 0 11 7"><path d="M0.700 6.300l4.800-5 4.800 5" fill="none" stroke="#222" stroke-width="1.400"></path></svg>
<svg style="left:1070px;top:737px" width="18" height="15" viewBox="0 0 18 15"><path d="M4.500 12.500a3.500 3.500 0 0 1-0.500-7 5 5 0 0 1 9.500-0.500 3.800 3.800 0 0 1 0.500 7.500z" fill="none" stroke="#222" stroke-width="1.400"></path><path d="M2 1l14 13" stroke="#222" stroke-width="1.400"></path></svg>
<svg style="left:1102px;top:736px" width="18" height="17" viewBox="0 0 18 17"><path d="M2 7.500A6.500 6.500 0 0 1 13.500 4M15 9a6.500 6.500 0 0 1-11 4" fill="none" stroke="#222" stroke-width="1.400"></path><path d="M14.500 0.500v4.200h-4.200M2.500 16v-4.200h4.200" fill="none" stroke="#222" stroke-width="1.400"></path><circle cx="13" cy="12.500" r="4" fill="#f7901e"></circle></svg>
<svg style="left:1137px;top:736px" width="12" height="17" viewBox="0 0 12 17"><rect x="3.200" y="0.700" width="5.600" height="10" rx="2.800" fill="none" stroke="#1a6ad0" stroke-width="1.400"></rect><path d="M0.700 8a5.300 5.300 0 0 0 10.600 0M6 13.500v3" fill="none" stroke="#1a6ad0" stroke-width="1.400"></path></svg>
<span class="t" style="left: 1171px; top: 728.5px; letter-spacing: -0.25px; transform: scaleX(0.8381); transform-origin: 0px 50%;">ESP</span>
<span class="t" style="left: 1170px; top: 744.5px; letter-spacing: -0.23px;">LAA</span>
<svg style="left:1211px;top:737px" width="17" height="13" viewBox="0 0 17 13"><path d="M0.700 4.500a11 11 0 0 1 15.600 0M3 7.300a7.800 7.800 0 0 1 11 0M5.500 9.800a4.200 4.200 0 0 1 6 0" fill="none" stroke="#222" stroke-width="1.300"></path><circle cx="8.500" cy="11.700" r="1.200" fill="#222"></circle></svg>
<svg style="left:1235px;top:737px" width="16" height="13" viewBox="0 0 16 13"><path d="M0.700 4.500h2.800l3.500-3.500v11L3.500 8.500H0.700z" fill="none" stroke="#222" stroke-width="1.200" stroke-linejoin="round"></path><path d="M9 4.500a3 3 0 0 1 0 4M11 2.800a5.500 5.500 0 0 1 0 7.400" fill="none" stroke="#222" stroke-width="1.100"></path><path d="M13 1a8 8 0 0 1 0 11" fill="none" stroke="#aaa" stroke-width="1.100"></path></svg>
<svg style="left:1258px;top:736px" width="18" height="14" viewBox="0 0 18 14"><rect x="2.500" y="3.500" width="13" height="9" rx="1.500" fill="#222"></rect><rect x="15.500" y="6" width="2" height="4" rx="0.800" fill="#222"></rect><path d="M1 0.500l3 3M4 0.500v3H1" fill="none" stroke="#222" stroke-width="1.200"></path><rect x="0" y="0" width="6" height="5" fill="none"></rect></svg>
<span class="t" style="left: 1318px; top: 728.5px; letter-spacing: -0.31px;">14:12</span>
<span class="t" style="left: 1292px; top: 744.5px; letter-spacing: 0.12px;">12/6/2025</span>





</body></html>
